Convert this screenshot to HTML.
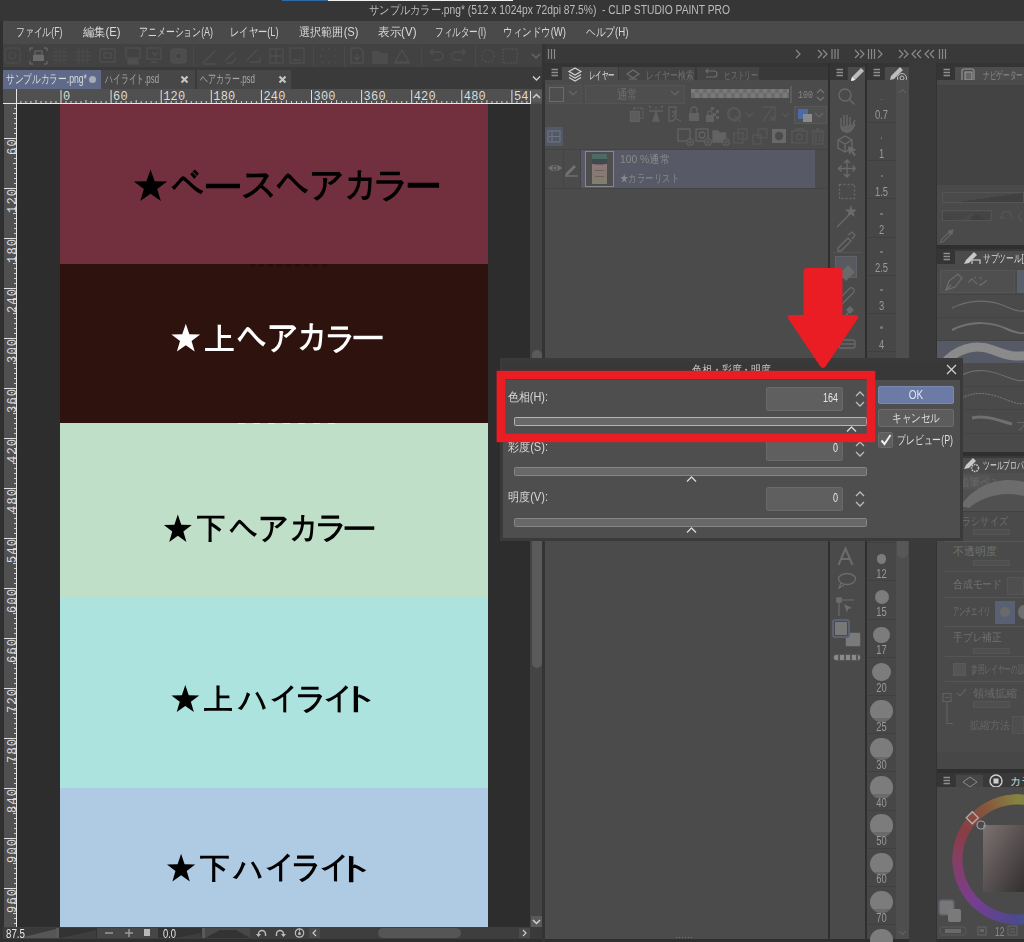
<!DOCTYPE html><html><head><meta charset="utf-8">
<style>
*{box-sizing:border-box;margin:0;padding:0}
html,body{width:1024px;height:942px;overflow:hidden;background:#2e2e2e;font-family:"Liberation Sans",sans-serif}
.a{position:absolute}
.t{position:absolute;white-space:nowrap;line-height:1}
</style></head><body>
<div class="a" style="left:0px;top:0px;width:1024px;height:21px;background:#363636;"></div>
<div class="a" style="left:282px;top:0px;width:46px;height:1px;background:#2f6aa5;"></div>
<div class="a" style="left:328px;top:0px;width:185px;height:1px;background:#f0f0f0;"></div>
<div class="t" style="left: 369px; top: 4px; font-size: 12px; color: rgb(188, 188, 188); --w: 361; transform-origin: 0px 0px; transform: scaleX(0.856465);">サンプルカラー.png* (512 x 1024px 72dpi 87.5%)&nbsp; - CLIP STUDIO PAINT PRO</div>
<div class="a" style="left:0px;top:21px;width:3px;height:921px;background:#303030;"></div>
<div class="a" style="left:3px;top:21px;width:1021px;height:23px;background:#4a4a4a;"></div>
<div class="t" style="left: 16px; top: 26px; font-size: 12px; color: rgb(216, 216, 216); --w: 46.5; transform-origin: 0px 0px; transform: scaleX(0.734271);">ファイル(F)</div>
<div class="t" style="left: 82.5px; top: 26px; font-size: 12px; color: rgb(216, 216, 216); --w: 37.5; transform-origin: 0px 0px; transform: scaleX(0.9375);">編集(E)</div>
<div class="t" style="left: 138.5px; top: 26px; font-size: 12px; color: rgb(216, 216, 216); --w: 74; transform-origin: 0px 0px; transform: scaleX(0.74);">アニメーション(A)</div>
<div class="t" style="left: 230px; top: 26px; font-size: 12px; color: rgb(216, 216, 216); --w: 48.5; transform-origin: 0px 0px; transform: scaleX(0.773872);">レイヤー(L)</div>
<div class="t" style="left: 298.5px; top: 26px; font-size: 12px; color: rgb(216, 216, 216); --w: 59.5; transform-origin: 0px 0px; transform: scaleX(0.929688);">選択範囲(S)</div>
<div class="t" style="left: 377.5px; top: 26px; font-size: 12px; color: rgb(216, 216, 216); --w: 38.5; transform-origin: 0px 0px; transform: scaleX(0.9625);">表示(V)</div>
<div class="t" style="left: 435px; top: 26px; font-size: 12px; color: rgb(216, 216, 216); --w: 51; transform-origin: 0px 0px; transform: scaleX(0.715005);">フィルター(I)</div>
<div class="t" style="left: 503px; top: 26px; font-size: 12px; color: rgb(216, 216, 216); --w: 63; transform-origin: 0px 0px; transform: scaleX(0.79417);">ウィンドウ(W)</div>
<div class="t" style="left: 585.5px; top: 26px; font-size: 12px; color: rgb(216, 216, 216); --w: 42.5; transform-origin: 0px 0px; transform: scaleX(0.806882);">ヘルプ(H)</div>
<div class="a" style="left:3px;top:44px;width:539px;height:24px;background:#424242;"></div>
<div class="a" style="left:3px;top:67px;width:539px;height:1px;background:#3a3a3a;"></div>
<svg class="a" style="left:0;top:44px" width="545" height="24"><rect x="5" y="4" width="15" height="15" rx="2" fill="none" stroke="#4f4f4f"></rect><path d="M12.5 8a3.5 3.5 0 1 0 3.5 3.5a2 2 0 0 0-2-2" fill="none" stroke="#4f4f4f"></path><path d="M30 4h3M30 4v3M47 4h-3M47 4v3M30 20h3M30 20v-3M47 20h-3M47 20v-3" stroke="#707070" fill="none"></path><rect x="33" y="11" width="11" height="6" fill="#6a6a6a"></rect><rect x="35" y="7" width="7" height="4" fill="none" stroke="#6a6a6a"></rect><path d="M52 8h16M52 12h16M52 16h16M56 4v16M60 4v16M64 4v16" stroke="#4c4c4c"></path><path d="M75 8h16M75 12h16M75 16h16M79 4v16M83 4v16M87 4v16" stroke="#4c4c4c"></path><g fill="none" stroke="#4f4f4f" stroke-width="1.4"><rect x="100" y="5" width="15" height="13" rx="1"></rect><rect x="104" y="9" width="7" height="5"></rect><rect x="126" y="4" width="14" height="10"></rect><rect x="128" y="15" width="10" height="5" fill="#4f4f4f"></rect><rect x="147" y="4" width="14" height="11"></rect><path d="M151 18h6M152 8l3 3 3-3"></path><rect x="171" y="5" width="15" height="14" rx="3" fill="#4c4c4c"></rect><circle cx="178.5" cy="12" r="3" fill="#424242"></circle><path d="M203 19l12-12M203 20h14"></path><path d="M225 17l10-10M226 19h6l4-5"></path><path d="M247 16l10-10M250 18h10v-5"></path><rect x="270" y="5" width="13" height="14"></rect><path d="M270 12h13M276 5v14"></path><rect x="290" y="4" width="14" height="15"></rect><path d="M293 16h8"></path><path d="M322 5l2 2M336 5l-2 2M322 19l2-2M336 19l-2-2M329 4v3M329 17v3M320 12h3M335 12h3" stroke-dasharray="1.5 1"></path><path d="M351 4h9l3 3v12h-12z"></path><path d="M357 10v6M354 13l3 3 3-3"></path><path d="M373 8h5l2 2h7v9h-14z" fill="#4c4c4c"></path><path d="M395 18l7-12 7 12z"></path><path d="M394 19h16"></path><path d="M430 8h9a4 4 0 0 1 0 8h-6M433 5l-3 3 3 3"></path><path d="M465 8h-9a4 4 0 0 0 0 8h6M462 5l3 3-3 3"></path><circle cx="488" cy="12" r="6" stroke-dasharray="2 1.5"></circle><rect x="503" y="5" width="14" height="14" stroke-dasharray="2 1"></rect></g><rect x="193" y="2" width="1" height="20" fill="#4a4a4a"></rect><rect x="313" y="2" width="1" height="20" fill="#4a4a4a"></rect><rect x="344" y="2" width="1" height="20" fill="#4a4a4a"></rect><rect x="421" y="2" width="1" height="20" fill="#4a4a4a"></rect><rect x="475" y="2" width="1" height="20" fill="#4a4a4a"></rect><path d="M532 10l4 4 4-4" stroke="#666" fill="none" stroke-width="1.5"></path></svg>
<div class="a" style="left:3px;top:68px;width:539px;height:21px;background:#3a3a3a;"></div>
<div class="a" style="left:3px;top:70px;width:98px;height:19px;background:#5e6a88;"></div>
<div class="a" style="left:101px;top:70px;width:94px;height:19px;background:#474747;"></div>
<div class="a" style="left:197px;top:70px;width:94px;height:19px;background:#474747;"></div>
<div class="t" style="left: 6px; top: 73px; font-size: 12px; color: rgb(220, 220, 220); --w: 81; transform-origin: 0px 0px; transform: scaleX(0.723013);">サンプルカラー.png*</div>
<div class="a" style="left:89px;top:76px;width:7px;height:7px;border-radius:50%;background:#a8acb8"></div>
<div class="t" style="left: 105px; top: 73px; font-size: 12px; color: rgb(168, 168, 168); --w: 54; transform-origin: 0px 0px; transform: scaleX(0.653061);">ハイライト.psd</div>
<div class="t" style="left: 200px; top: 73px; font-size: 12px; color: rgb(168, 168, 168); --w: 55; transform-origin: 0px 0px; transform: scaleX(0.665155);">ヘアカラー.psd</div>
<svg class="a" style="left:180px;top:75px" width="9" height="9"><path d="M1.5 1.5l6 6M7.5 1.5l-6 6" stroke="#c4c4c4" stroke-width="2.2"></path></svg>
<svg class="a" style="left:278px;top:75px" width="9" height="9"><path d="M1.5 1.5l6 6M7.5 1.5l-6 6" stroke="#c4c4c4" stroke-width="2.2"></path></svg>
<svg class="a" style="left:532px;top:75px" width="9" height="7"><path d="M1 1.5l3.5 3.5 3.5-3.5" stroke="#d0d0d0" fill="none" stroke-width="1.4"></path></svg>
<div class="a" style="left:3px;top:89px;width:539px;height:15px;background:#505050;"></div>
<div class="a" style="left:4px;top:104px;width:13px;height:823px;background:#505050;"></div>
<svg class="a" style="left:0;top:0" width="545" height="942"><rect x="3" y="103" width="527" height="1" fill="#e8e8e8"></rect><rect x="16" y="89" width="1" height="838" fill="#e8e8e8"></rect><rect x="530" y="91" width="1" height="13" fill="#e0e0e0"></rect><rect x="20.4" y="101" width="1" height="2" fill="#cfcfcf"></rect><rect x="25.4" y="101" width="1" height="2" fill="#cfcfcf"></rect><rect x="30.4" y="101" width="1" height="2" fill="#cfcfcf"></rect><rect x="35.5" y="100" width="1" height="3" fill="#cfcfcf"></rect><rect x="40.5" y="101" width="1" height="2" fill="#cfcfcf"></rect><rect x="45.5" y="101" width="1" height="2" fill="#cfcfcf"></rect><rect x="50.5" y="101" width="1" height="2" fill="#cfcfcf"></rect><rect x="55.5" y="101" width="1" height="2" fill="#cfcfcf"></rect><rect x="60.5" y="90" width="1" height="13" fill="#e0e0e0"></rect><rect x="65.5" y="101" width="1" height="2" fill="#cfcfcf"></rect><rect x="70.5" y="101" width="1" height="2" fill="#cfcfcf"></rect><rect x="75.5" y="101" width="1" height="2" fill="#cfcfcf"></rect><rect x="80.5" y="101" width="1" height="2" fill="#cfcfcf"></rect><rect x="85.5" y="100" width="1" height="3" fill="#cfcfcf"></rect><rect x="90.6" y="101" width="1" height="2" fill="#cfcfcf"></rect><rect x="95.6" y="101" width="1" height="2" fill="#cfcfcf"></rect><rect x="100.6" y="101" width="1" height="2" fill="#cfcfcf"></rect><rect x="105.6" y="101" width="1" height="2" fill="#cfcfcf"></rect><rect x="110.6" y="90" width="1" height="13" fill="#e0e0e0"></rect><rect x="115.6" y="101" width="1" height="2" fill="#cfcfcf"></rect><rect x="120.6" y="101" width="1" height="2" fill="#cfcfcf"></rect><rect x="125.6" y="101" width="1" height="2" fill="#cfcfcf"></rect><rect x="130.6" y="101" width="1" height="2" fill="#cfcfcf"></rect><rect x="135.7" y="100" width="1" height="3" fill="#cfcfcf"></rect><rect x="140.7" y="101" width="1" height="2" fill="#cfcfcf"></rect><rect x="145.7" y="101" width="1" height="2" fill="#cfcfcf"></rect><rect x="150.7" y="101" width="1" height="2" fill="#cfcfcf"></rect><rect x="155.7" y="101" width="1" height="2" fill="#cfcfcf"></rect><rect x="160.7" y="90" width="1" height="13" fill="#e0e0e0"></rect><rect x="165.7" y="101" width="1" height="2" fill="#cfcfcf"></rect><rect x="170.7" y="101" width="1" height="2" fill="#cfcfcf"></rect><rect x="175.7" y="101" width="1" height="2" fill="#cfcfcf"></rect><rect x="180.7" y="101" width="1" height="2" fill="#cfcfcf"></rect><rect x="185.8" y="100" width="1" height="3" fill="#cfcfcf"></rect><rect x="190.8" y="101" width="1" height="2" fill="#cfcfcf"></rect><rect x="195.8" y="101" width="1" height="2" fill="#cfcfcf"></rect><rect x="200.8" y="101" width="1" height="2" fill="#cfcfcf"></rect><rect x="205.8" y="101" width="1" height="2" fill="#cfcfcf"></rect><rect x="210.8" y="90" width="1" height="13" fill="#e0e0e0"></rect><rect x="215.8" y="101" width="1" height="2" fill="#cfcfcf"></rect><rect x="220.8" y="101" width="1" height="2" fill="#cfcfcf"></rect><rect x="225.8" y="101" width="1" height="2" fill="#cfcfcf"></rect><rect x="230.8" y="101" width="1" height="2" fill="#cfcfcf"></rect><rect x="235.9" y="100" width="1" height="3" fill="#cfcfcf"></rect><rect x="240.9" y="101" width="1" height="2" fill="#cfcfcf"></rect><rect x="245.9" y="101" width="1" height="2" fill="#cfcfcf"></rect><rect x="250.9" y="101" width="1" height="2" fill="#cfcfcf"></rect><rect x="255.9" y="101" width="1" height="2" fill="#cfcfcf"></rect><rect x="260.9" y="90" width="1" height="13" fill="#e0e0e0"></rect><rect x="265.9" y="101" width="1" height="2" fill="#cfcfcf"></rect><rect x="270.9" y="101" width="1" height="2" fill="#cfcfcf"></rect><rect x="275.9" y="101" width="1" height="2" fill="#cfcfcf"></rect><rect x="280.9" y="101" width="1" height="2" fill="#cfcfcf"></rect><rect x="285.9" y="100" width="1" height="3" fill="#cfcfcf"></rect><rect x="291.0" y="101" width="1" height="2" fill="#cfcfcf"></rect><rect x="296.0" y="101" width="1" height="2" fill="#cfcfcf"></rect><rect x="301.0" y="101" width="1" height="2" fill="#cfcfcf"></rect><rect x="306.0" y="101" width="1" height="2" fill="#cfcfcf"></rect><rect x="311.0" y="90" width="1" height="13" fill="#e0e0e0"></rect><rect x="316.0" y="101" width="1" height="2" fill="#cfcfcf"></rect><rect x="321.0" y="101" width="1" height="2" fill="#cfcfcf"></rect><rect x="326.0" y="101" width="1" height="2" fill="#cfcfcf"></rect><rect x="331.0" y="101" width="1" height="2" fill="#cfcfcf"></rect><rect x="336.1" y="100" width="1" height="3" fill="#cfcfcf"></rect><rect x="341.1" y="101" width="1" height="2" fill="#cfcfcf"></rect><rect x="346.1" y="101" width="1" height="2" fill="#cfcfcf"></rect><rect x="351.1" y="101" width="1" height="2" fill="#cfcfcf"></rect><rect x="356.1" y="101" width="1" height="2" fill="#cfcfcf"></rect><rect x="361.1" y="90" width="1" height="13" fill="#e0e0e0"></rect><rect x="366.1" y="101" width="1" height="2" fill="#cfcfcf"></rect><rect x="371.1" y="101" width="1" height="2" fill="#cfcfcf"></rect><rect x="376.1" y="101" width="1" height="2" fill="#cfcfcf"></rect><rect x="381.1" y="101" width="1" height="2" fill="#cfcfcf"></rect><rect x="386.2" y="100" width="1" height="3" fill="#cfcfcf"></rect><rect x="391.2" y="101" width="1" height="2" fill="#cfcfcf"></rect><rect x="396.2" y="101" width="1" height="2" fill="#cfcfcf"></rect><rect x="401.2" y="101" width="1" height="2" fill="#cfcfcf"></rect><rect x="406.2" y="101" width="1" height="2" fill="#cfcfcf"></rect><rect x="411.2" y="90" width="1" height="13" fill="#e0e0e0"></rect><rect x="416.2" y="101" width="1" height="2" fill="#cfcfcf"></rect><rect x="421.2" y="101" width="1" height="2" fill="#cfcfcf"></rect><rect x="426.2" y="101" width="1" height="2" fill="#cfcfcf"></rect><rect x="431.2" y="101" width="1" height="2" fill="#cfcfcf"></rect><rect x="436.2" y="100" width="1" height="3" fill="#cfcfcf"></rect><rect x="441.3" y="101" width="1" height="2" fill="#cfcfcf"></rect><rect x="446.3" y="101" width="1" height="2" fill="#cfcfcf"></rect><rect x="451.3" y="101" width="1" height="2" fill="#cfcfcf"></rect><rect x="456.3" y="101" width="1" height="2" fill="#cfcfcf"></rect><rect x="461.3" y="90" width="1" height="13" fill="#e0e0e0"></rect><rect x="466.3" y="101" width="1" height="2" fill="#cfcfcf"></rect><rect x="471.3" y="101" width="1" height="2" fill="#cfcfcf"></rect><rect x="476.3" y="101" width="1" height="2" fill="#cfcfcf"></rect><rect x="481.3" y="101" width="1" height="2" fill="#cfcfcf"></rect><rect x="486.4" y="100" width="1" height="3" fill="#cfcfcf"></rect><rect x="491.4" y="101" width="1" height="2" fill="#cfcfcf"></rect><rect x="496.4" y="101" width="1" height="2" fill="#cfcfcf"></rect><rect x="501.4" y="101" width="1" height="2" fill="#cfcfcf"></rect><rect x="506.4" y="101" width="1" height="2" fill="#cfcfcf"></rect><rect x="511.4" y="90" width="1" height="13" fill="#e0e0e0"></rect><rect x="516.4" y="101" width="1" height="2" fill="#cfcfcf"></rect><rect x="521.4" y="101" width="1" height="2" fill="#cfcfcf"></rect><rect x="526.4" y="101" width="1" height="2" fill="#cfcfcf"></rect><rect x="14" y="108.0" width="2" height="1" fill="#cfcfcf"></rect><rect x="13" y="113.0" width="3" height="1" fill="#cfcfcf"></rect><rect x="14" y="118.0" width="2" height="1" fill="#cfcfcf"></rect><rect x="14" y="123.0" width="2" height="1" fill="#cfcfcf"></rect><rect x="14" y="128.0" width="2" height="1" fill="#cfcfcf"></rect><rect x="14" y="133.0" width="2" height="1" fill="#cfcfcf"></rect><rect x="4" y="138.0" width="12" height="1" fill="#e0e0e0"></rect><rect x="14" y="143.0" width="2" height="1" fill="#cfcfcf"></rect><rect x="14" y="148.0" width="2" height="1" fill="#cfcfcf"></rect><rect x="14" y="153.0" width="2" height="1" fill="#cfcfcf"></rect><rect x="14" y="158.0" width="2" height="1" fill="#cfcfcf"></rect><rect x="13" y="163.0" width="3" height="1" fill="#cfcfcf"></rect><rect x="14" y="168.0" width="2" height="1" fill="#cfcfcf"></rect><rect x="14" y="173.0" width="2" height="1" fill="#cfcfcf"></rect><rect x="14" y="178.0" width="2" height="1" fill="#cfcfcf"></rect><rect x="14" y="183.0" width="2" height="1" fill="#cfcfcf"></rect><rect x="4" y="188.0" width="12" height="1" fill="#e0e0e0"></rect><rect x="14" y="193.0" width="2" height="1" fill="#cfcfcf"></rect><rect x="14" y="198.0" width="2" height="1" fill="#cfcfcf"></rect><rect x="14" y="203.0" width="2" height="1" fill="#cfcfcf"></rect><rect x="14" y="208.0" width="2" height="1" fill="#cfcfcf"></rect><rect x="13" y="213.0" width="3" height="1" fill="#cfcfcf"></rect><rect x="14" y="218.0" width="2" height="1" fill="#cfcfcf"></rect><rect x="14" y="223.0" width="2" height="1" fill="#cfcfcf"></rect><rect x="14" y="228.0" width="2" height="1" fill="#cfcfcf"></rect><rect x="14" y="233.0" width="2" height="1" fill="#cfcfcf"></rect><rect x="4" y="238.0" width="12" height="1" fill="#e0e0e0"></rect><rect x="14" y="243.0" width="2" height="1" fill="#cfcfcf"></rect><rect x="14" y="248.0" width="2" height="1" fill="#cfcfcf"></rect><rect x="14" y="253.0" width="2" height="1" fill="#cfcfcf"></rect><rect x="14" y="258.0" width="2" height="1" fill="#cfcfcf"></rect><rect x="13" y="263.0" width="3" height="1" fill="#cfcfcf"></rect><rect x="14" y="268.0" width="2" height="1" fill="#cfcfcf"></rect><rect x="14" y="273.0" width="2" height="1" fill="#cfcfcf"></rect><rect x="14" y="278.0" width="2" height="1" fill="#cfcfcf"></rect><rect x="14" y="283.0" width="2" height="1" fill="#cfcfcf"></rect><rect x="4" y="288.0" width="12" height="1" fill="#e0e0e0"></rect><rect x="14" y="293.0" width="2" height="1" fill="#cfcfcf"></rect><rect x="14" y="298.0" width="2" height="1" fill="#cfcfcf"></rect><rect x="14" y="303.0" width="2" height="1" fill="#cfcfcf"></rect><rect x="14" y="308.0" width="2" height="1" fill="#cfcfcf"></rect><rect x="13" y="313.0" width="3" height="1" fill="#cfcfcf"></rect><rect x="14" y="318.0" width="2" height="1" fill="#cfcfcf"></rect><rect x="14" y="323.0" width="2" height="1" fill="#cfcfcf"></rect><rect x="14" y="328.0" width="2" height="1" fill="#cfcfcf"></rect><rect x="14" y="333.0" width="2" height="1" fill="#cfcfcf"></rect><rect x="4" y="338.0" width="12" height="1" fill="#e0e0e0"></rect><rect x="14" y="343.0" width="2" height="1" fill="#cfcfcf"></rect><rect x="14" y="348.0" width="2" height="1" fill="#cfcfcf"></rect><rect x="14" y="353.0" width="2" height="1" fill="#cfcfcf"></rect><rect x="14" y="358.0" width="2" height="1" fill="#cfcfcf"></rect><rect x="13" y="363.0" width="3" height="1" fill="#cfcfcf"></rect><rect x="14" y="368.0" width="2" height="1" fill="#cfcfcf"></rect><rect x="14" y="373.0" width="2" height="1" fill="#cfcfcf"></rect><rect x="14" y="378.0" width="2" height="1" fill="#cfcfcf"></rect><rect x="14" y="383.0" width="2" height="1" fill="#cfcfcf"></rect><rect x="4" y="388.0" width="12" height="1" fill="#e0e0e0"></rect><rect x="14" y="393.0" width="2" height="1" fill="#cfcfcf"></rect><rect x="14" y="398.0" width="2" height="1" fill="#cfcfcf"></rect><rect x="14" y="403.0" width="2" height="1" fill="#cfcfcf"></rect><rect x="14" y="408.0" width="2" height="1" fill="#cfcfcf"></rect><rect x="13" y="413.0" width="3" height="1" fill="#cfcfcf"></rect><rect x="14" y="418.0" width="2" height="1" fill="#cfcfcf"></rect><rect x="14" y="423.0" width="2" height="1" fill="#cfcfcf"></rect><rect x="14" y="428.0" width="2" height="1" fill="#cfcfcf"></rect><rect x="14" y="433.0" width="2" height="1" fill="#cfcfcf"></rect><rect x="4" y="438.0" width="12" height="1" fill="#e0e0e0"></rect><rect x="14" y="443.0" width="2" height="1" fill="#cfcfcf"></rect><rect x="14" y="448.0" width="2" height="1" fill="#cfcfcf"></rect><rect x="14" y="453.0" width="2" height="1" fill="#cfcfcf"></rect><rect x="14" y="458.0" width="2" height="1" fill="#cfcfcf"></rect><rect x="13" y="463.0" width="3" height="1" fill="#cfcfcf"></rect><rect x="14" y="468.0" width="2" height="1" fill="#cfcfcf"></rect><rect x="14" y="473.0" width="2" height="1" fill="#cfcfcf"></rect><rect x="14" y="478.0" width="2" height="1" fill="#cfcfcf"></rect><rect x="14" y="483.0" width="2" height="1" fill="#cfcfcf"></rect><rect x="4" y="488.0" width="12" height="1" fill="#e0e0e0"></rect><rect x="14" y="493.0" width="2" height="1" fill="#cfcfcf"></rect><rect x="14" y="498.0" width="2" height="1" fill="#cfcfcf"></rect><rect x="14" y="503.0" width="2" height="1" fill="#cfcfcf"></rect><rect x="14" y="508.0" width="2" height="1" fill="#cfcfcf"></rect><rect x="13" y="513.0" width="3" height="1" fill="#cfcfcf"></rect><rect x="14" y="518.0" width="2" height="1" fill="#cfcfcf"></rect><rect x="14" y="523.0" width="2" height="1" fill="#cfcfcf"></rect><rect x="14" y="528.0" width="2" height="1" fill="#cfcfcf"></rect><rect x="14" y="533.0" width="2" height="1" fill="#cfcfcf"></rect><rect x="4" y="538.0" width="12" height="1" fill="#e0e0e0"></rect><rect x="14" y="543.0" width="2" height="1" fill="#cfcfcf"></rect><rect x="14" y="548.0" width="2" height="1" fill="#cfcfcf"></rect><rect x="14" y="553.0" width="2" height="1" fill="#cfcfcf"></rect><rect x="14" y="558.0" width="2" height="1" fill="#cfcfcf"></rect><rect x="13" y="563.0" width="3" height="1" fill="#cfcfcf"></rect><rect x="14" y="568.0" width="2" height="1" fill="#cfcfcf"></rect><rect x="14" y="573.0" width="2" height="1" fill="#cfcfcf"></rect><rect x="14" y="578.0" width="2" height="1" fill="#cfcfcf"></rect><rect x="14" y="583.0" width="2" height="1" fill="#cfcfcf"></rect><rect x="4" y="588.0" width="12" height="1" fill="#e0e0e0"></rect><rect x="14" y="593.0" width="2" height="1" fill="#cfcfcf"></rect><rect x="14" y="598.0" width="2" height="1" fill="#cfcfcf"></rect><rect x="14" y="603.0" width="2" height="1" fill="#cfcfcf"></rect><rect x="14" y="608.0" width="2" height="1" fill="#cfcfcf"></rect><rect x="13" y="613.0" width="3" height="1" fill="#cfcfcf"></rect><rect x="14" y="618.0" width="2" height="1" fill="#cfcfcf"></rect><rect x="14" y="623.0" width="2" height="1" fill="#cfcfcf"></rect><rect x="14" y="628.0" width="2" height="1" fill="#cfcfcf"></rect><rect x="14" y="633.0" width="2" height="1" fill="#cfcfcf"></rect><rect x="4" y="638.0" width="12" height="1" fill="#e0e0e0"></rect><rect x="14" y="643.0" width="2" height="1" fill="#cfcfcf"></rect><rect x="14" y="648.0" width="2" height="1" fill="#cfcfcf"></rect><rect x="14" y="653.0" width="2" height="1" fill="#cfcfcf"></rect><rect x="14" y="658.0" width="2" height="1" fill="#cfcfcf"></rect><rect x="13" y="663.0" width="3" height="1" fill="#cfcfcf"></rect><rect x="14" y="668.0" width="2" height="1" fill="#cfcfcf"></rect><rect x="14" y="673.0" width="2" height="1" fill="#cfcfcf"></rect><rect x="14" y="678.0" width="2" height="1" fill="#cfcfcf"></rect><rect x="14" y="683.0" width="2" height="1" fill="#cfcfcf"></rect><rect x="4" y="688.0" width="12" height="1" fill="#e0e0e0"></rect><rect x="14" y="693.0" width="2" height="1" fill="#cfcfcf"></rect><rect x="14" y="698.0" width="2" height="1" fill="#cfcfcf"></rect><rect x="14" y="703.0" width="2" height="1" fill="#cfcfcf"></rect><rect x="14" y="708.0" width="2" height="1" fill="#cfcfcf"></rect><rect x="13" y="713.0" width="3" height="1" fill="#cfcfcf"></rect><rect x="14" y="718.0" width="2" height="1" fill="#cfcfcf"></rect><rect x="14" y="723.0" width="2" height="1" fill="#cfcfcf"></rect><rect x="14" y="728.0" width="2" height="1" fill="#cfcfcf"></rect><rect x="14" y="733.0" width="2" height="1" fill="#cfcfcf"></rect><rect x="4" y="738.0" width="12" height="1" fill="#e0e0e0"></rect><rect x="14" y="743.0" width="2" height="1" fill="#cfcfcf"></rect><rect x="14" y="748.0" width="2" height="1" fill="#cfcfcf"></rect><rect x="14" y="753.0" width="2" height="1" fill="#cfcfcf"></rect><rect x="14" y="758.0" width="2" height="1" fill="#cfcfcf"></rect><rect x="13" y="763.0" width="3" height="1" fill="#cfcfcf"></rect><rect x="14" y="768.0" width="2" height="1" fill="#cfcfcf"></rect><rect x="14" y="773.0" width="2" height="1" fill="#cfcfcf"></rect><rect x="14" y="778.0" width="2" height="1" fill="#cfcfcf"></rect><rect x="14" y="783.0" width="2" height="1" fill="#cfcfcf"></rect><rect x="4" y="788.0" width="12" height="1" fill="#e0e0e0"></rect><rect x="14" y="793.0" width="2" height="1" fill="#cfcfcf"></rect><rect x="14" y="798.0" width="2" height="1" fill="#cfcfcf"></rect><rect x="14" y="803.0" width="2" height="1" fill="#cfcfcf"></rect><rect x="14" y="808.0" width="2" height="1" fill="#cfcfcf"></rect><rect x="13" y="813.0" width="3" height="1" fill="#cfcfcf"></rect><rect x="14" y="818.0" width="2" height="1" fill="#cfcfcf"></rect><rect x="14" y="823.0" width="2" height="1" fill="#cfcfcf"></rect><rect x="14" y="828.0" width="2" height="1" fill="#cfcfcf"></rect><rect x="14" y="833.0" width="2" height="1" fill="#cfcfcf"></rect><rect x="4" y="838.0" width="12" height="1" fill="#e0e0e0"></rect><rect x="14" y="843.0" width="2" height="1" fill="#cfcfcf"></rect><rect x="14" y="848.0" width="2" height="1" fill="#cfcfcf"></rect><rect x="14" y="853.0" width="2" height="1" fill="#cfcfcf"></rect><rect x="14" y="858.0" width="2" height="1" fill="#cfcfcf"></rect><rect x="13" y="863.0" width="3" height="1" fill="#cfcfcf"></rect><rect x="14" y="868.0" width="2" height="1" fill="#cfcfcf"></rect><rect x="14" y="873.0" width="2" height="1" fill="#cfcfcf"></rect><rect x="14" y="878.0" width="2" height="1" fill="#cfcfcf"></rect><rect x="14" y="883.0" width="2" height="1" fill="#cfcfcf"></rect><rect x="4" y="888.0" width="12" height="1" fill="#e0e0e0"></rect><rect x="14" y="893.0" width="2" height="1" fill="#cfcfcf"></rect><rect x="14" y="898.0" width="2" height="1" fill="#cfcfcf"></rect><rect x="14" y="903.0" width="2" height="1" fill="#cfcfcf"></rect><rect x="14" y="908.0" width="2" height="1" fill="#cfcfcf"></rect><rect x="13" y="913.0" width="3" height="1" fill="#cfcfcf"></rect><rect x="14" y="918.0" width="2" height="1" fill="#cfcfcf"></rect><rect x="14" y="923.0" width="2" height="1" fill="#cfcfcf"></rect></svg>
<div class="t" style="left:63.0px;top:91px;font-family:'Liberation Mono',monospace;font-size:12px;letter-spacing:0.2px;color:#dcdcdc">0</div>
<div class="t" style="left:113.1px;top:91px;font-family:'Liberation Mono',monospace;font-size:12px;letter-spacing:0.2px;color:#dcdcdc">60</div>
<div class="t" style="left:163.2px;top:91px;font-family:'Liberation Mono',monospace;font-size:12px;letter-spacing:0.2px;color:#dcdcdc">120</div>
<div class="t" style="left:213.3px;top:91px;font-family:'Liberation Mono',monospace;font-size:12px;letter-spacing:0.2px;color:#dcdcdc">180</div>
<div class="t" style="left:263.4px;top:91px;font-family:'Liberation Mono',monospace;font-size:12px;letter-spacing:0.2px;color:#dcdcdc">240</div>
<div class="t" style="left:313.5px;top:91px;font-family:'Liberation Mono',monospace;font-size:12px;letter-spacing:0.2px;color:#dcdcdc">300</div>
<div class="t" style="left:363.6px;top:91px;font-family:'Liberation Mono',monospace;font-size:12px;letter-spacing:0.2px;color:#dcdcdc">360</div>
<div class="t" style="left:413.7px;top:91px;font-family:'Liberation Mono',monospace;font-size:12px;letter-spacing:0.2px;color:#dcdcdc">420</div>
<div class="t" style="left:463.8px;top:91px;font-family:'Liberation Mono',monospace;font-size:12px;letter-spacing:0.2px;color:#dcdcdc">480</div>
<div class="t" style="left:513.9px;top:91px;font-family:'Liberation Mono',monospace;font-size:12px;letter-spacing:0.2px;color:#dcdcdc">54</div>
<div class="t" style="left:6.5px;top:154.5px;font-family:'Liberation Mono',monospace;font-size:12px;letter-spacing:1.2px;color:#dcdcdc;transform:rotate(-90deg);transform-origin:0 0">60</div>
<div class="t" style="left:6.5px;top:212.5px;font-family:'Liberation Mono',monospace;font-size:12px;letter-spacing:1.2px;color:#dcdcdc;transform:rotate(-90deg);transform-origin:0 0">120</div>
<div class="t" style="left:6.5px;top:262.5px;font-family:'Liberation Mono',monospace;font-size:12px;letter-spacing:1.2px;color:#dcdcdc;transform:rotate(-90deg);transform-origin:0 0">180</div>
<div class="t" style="left:6.5px;top:312.5px;font-family:'Liberation Mono',monospace;font-size:12px;letter-spacing:1.2px;color:#dcdcdc;transform:rotate(-90deg);transform-origin:0 0">240</div>
<div class="t" style="left:6.5px;top:362.5px;font-family:'Liberation Mono',monospace;font-size:12px;letter-spacing:1.2px;color:#dcdcdc;transform:rotate(-90deg);transform-origin:0 0">300</div>
<div class="t" style="left:6.5px;top:412.5px;font-family:'Liberation Mono',monospace;font-size:12px;letter-spacing:1.2px;color:#dcdcdc;transform:rotate(-90deg);transform-origin:0 0">360</div>
<div class="t" style="left:6.5px;top:462.5px;font-family:'Liberation Mono',monospace;font-size:12px;letter-spacing:1.2px;color:#dcdcdc;transform:rotate(-90deg);transform-origin:0 0">420</div>
<div class="t" style="left:6.5px;top:512.5px;font-family:'Liberation Mono',monospace;font-size:12px;letter-spacing:1.2px;color:#dcdcdc;transform:rotate(-90deg);transform-origin:0 0">480</div>
<div class="t" style="left:6.5px;top:562.5px;font-family:'Liberation Mono',monospace;font-size:12px;letter-spacing:1.2px;color:#dcdcdc;transform:rotate(-90deg);transform-origin:0 0">540</div>
<div class="t" style="left:6.5px;top:612.5px;font-family:'Liberation Mono',monospace;font-size:12px;letter-spacing:1.2px;color:#dcdcdc;transform:rotate(-90deg);transform-origin:0 0">600</div>
<div class="t" style="left:6.5px;top:662.5px;font-family:'Liberation Mono',monospace;font-size:12px;letter-spacing:1.2px;color:#dcdcdc;transform:rotate(-90deg);transform-origin:0 0">660</div>
<div class="t" style="left:6.5px;top:712.5px;font-family:'Liberation Mono',monospace;font-size:12px;letter-spacing:1.2px;color:#dcdcdc;transform:rotate(-90deg);transform-origin:0 0">720</div>
<div class="t" style="left:6.5px;top:762.5px;font-family:'Liberation Mono',monospace;font-size:12px;letter-spacing:1.2px;color:#dcdcdc;transform:rotate(-90deg);transform-origin:0 0">780</div>
<div class="t" style="left:6.5px;top:812.5px;font-family:'Liberation Mono',monospace;font-size:12px;letter-spacing:1.2px;color:#dcdcdc;transform:rotate(-90deg);transform-origin:0 0">840</div>
<div class="t" style="left:6.5px;top:862.5px;font-family:'Liberation Mono',monospace;font-size:12px;letter-spacing:1.2px;color:#dcdcdc;transform:rotate(-90deg);transform-origin:0 0">900</div>
<div class="t" style="left:6.5px;top:912.5px;font-family:'Liberation Mono',monospace;font-size:12px;letter-spacing:1.2px;color:#dcdcdc;transform:rotate(-90deg);transform-origin:0 0">960</div>
<div class="a" style="left:3px;top:89px;width:13px;height:14px;background:#505050;"></div>
<div class="a" style="left:531px;top:90px;width:11px;height:12px;background:#5a5a5a;"></div>
<svg class="a" style="left:531px;top:90px" width="11" height="12"><path d="M2 8l3.5-3.5L9 8" stroke="#d0d0d0" fill="none" stroke-width="1.5"></path></svg>
<div class="a" style="left:17px;top:104px;width:513px;height:823px;background:#2d2d2d;"></div>
<div class="a" style="left:60px;top:104px;width:428px;height:160px;background:#722f3d;"></div>
<div class="a" style="left:60px;top:264px;width:428px;height:159px;background:#2e120e;"></div>
<div class="a" style="left:60px;top:423px;width:428px;height:174px;background:#c0dfc8;"></div>
<div class="a" style="left:60px;top:597px;width:428px;height:191px;background:#ade3de;"></div>
<div class="a" style="left:60px;top:788px;width:428px;height:139px;background:#afcbe3;"></div>
<div class="a" style="left:238px;top:423px;width:102px;height:1px;background:repeating-linear-gradient(90deg,#e8f4e8 0 7px,transparent 7px 15px)"></div>
<div class="a" style="left:250px;top:264px;width:80px;height:3px;background:repeating-linear-gradient(90deg,#1e0a08 0 5px,transparent 5px 9px);opacity:.6"></div>
<div class="t" style="left:171.54px;top:165.41px;font-size:100px;font-weight:bold;color:#000;transform:scale(0.3188,0.3623);transform-origin:0 0">ベ</div>
<div class="t" style="left:203.49px;top:169.97px;font-size:100px;font-weight:bold;color:#000;transform:scale(0.3948,0.3357);transform-origin:0 0">ー</div>
<div class="t" style="left:240.68px;top:166.23px;font-size:100px;font-weight:bold;color:#000;transform:scale(0.3631,0.3535);transform-origin:0 0">ス</div>
<div class="t" style="left:277.21px;top:162.40px;font-size:100px;font-weight:bold;color:#000;transform:scale(0.3119,0.4000);transform-origin:0 0">ヘ</div>
<div class="t" style="left:309.16px;top:166.28px;font-size:100px;font-weight:bold;color:#000;transform:scale(0.3494,0.3613);transform-origin:0 0">ア</div>
<div class="t" style="left:344.82px;top:164.99px;font-size:100px;font-weight:bold;color:#000;transform:scale(0.3125,0.3627);transform-origin:0 0">カ</div>
<div class="t" style="left:373.16px;top:167.16px;font-size:100px;font-weight:bold;color:#000;transform:scale(0.3599,0.3494);transform-origin:0 0">ラ</div>
<div class="t" style="left:405.10px;top:168.13px;font-size:100px;font-weight:bold;color:#000;transform:scale(0.3721,0.3643);transform-origin:0 0">ー</div>
<div class="t" style="left:204.80px;top:323.51px;font-size:100px;font-weight:bold;color:#fff;transform:scale(0.2939,0.2901);transform-origin:0 0">上</div>
<div class="t" style="left:238.47px;top:315.51px;font-size:100px;font-weight:bold;color:#fff;transform:scale(0.2733,0.3860);transform-origin:0 0">ヘ</div>
<div class="t" style="left:267.16px;top:319.96px;font-size:100px;font-weight:bold;color:#fff;transform:scale(0.3047,0.3362);transform-origin:0 0">ア</div>
<div class="t" style="left:297.58px;top:318.89px;font-size:100px;font-weight:bold;color:#fff;transform:scale(0.2862,0.3313);transform-origin:0 0">カ</div>
<div class="t" style="left:324.62px;top:321.95px;font-size:100px;font-weight:bold;color:#fff;transform:scale(0.3092,0.3118);transform-origin:0 0">ラ</div>
<div class="t" style="left:351.42px;top:326.10px;font-size:100px;font-weight:bold;color:#fff;transform:scale(0.3407,0.2500);transform-origin:0 0">ー</div>
<div class="t" style="left:197.30px;top:513.80px;font-size:100px;font-weight:bold;color:#000;transform:scale(0.2806,0.2879);transform-origin:0 0">下</div>
<div class="t" style="left:230.37px;top:509.74px;font-size:100px;font-weight:bold;color:#000;transform:scale(0.2703,0.3400);transform-origin:0 0">ヘ</div>
<div class="t" style="left:258.40px;top:511.98px;font-size:100px;font-weight:bold;color:#000;transform:scale(0.3000,0.3150);transform-origin:0 0">ア</div>
<div class="t" style="left:289.63px;top:510.19px;font-size:100px;font-weight:bold;color:#000;transform:scale(0.2788,0.3241);transform-origin:0 0">カ</div>
<div class="t" style="left:315.33px;top:512.06px;font-size:100px;font-weight:bold;color:#000;transform:scale(0.3243,0.3106);transform-origin:0 0">ラ</div>
<div class="t" style="left:342.12px;top:515.53px;font-size:100px;font-weight:bold;color:#000;transform:scale(0.3547,0.2643);transform-origin:0 0">ー</div>
<div class="t" style="left:204.30px;top:684.82px;font-size:100px;font-weight:bold;color:#000;transform:scale(0.2898,0.2835);transform-origin:0 0">上</div>
<div class="t" style="left:238.82px;top:682.73px;font-size:100px;font-weight:bold;color:#000;transform:scale(0.2802,0.3138);transform-origin:0 0">ハ</div>
<div class="t" style="left:269.71px;top:682.38px;font-size:100px;font-weight:bold;color:#000;transform:scale(0.2787,0.3022);transform-origin:0 0">イ</div>
<div class="t" style="left:294.66px;top:683.09px;font-size:100px;font-weight:bold;color:#000;transform:scale(0.3158,0.3082);transform-origin:0 0">ラ</div>
<div class="t" style="left:324.17px;top:682.38px;font-size:100px;font-weight:bold;color:#000;transform:scale(0.2862,0.3022);transform-origin:0 0">イ</div>
<div class="t" style="left:340.23px;top:682.71px;font-size:100px;font-weight:bold;color:#000;transform:scale(0.3864,0.2989);transform-origin:0 0">ト</div>
<div class="t" style="left:199.80px;top:853.80px;font-size:100px;font-weight:bold;color:#000;transform:scale(0.2939,0.2879);transform-origin:0 0">下</div>
<div class="t" style="left:234.36px;top:852.61px;font-size:100px;font-weight:bold;color:#000;transform:scale(0.2901,0.3034);transform-origin:0 0">ハ</div>
<div class="t" style="left:265.25px;top:851.34px;font-size:100px;font-weight:bold;color:#000;transform:scale(0.2900,0.3056);transform-origin:0 0">イ</div>
<div class="t" style="left:290.93px;top:852.06px;font-size:100px;font-weight:bold;color:#000;transform:scale(0.3079,0.3106);transform-origin:0 0">ラ</div>
<div class="t" style="left:319.73px;top:851.38px;font-size:100px;font-weight:bold;color:#000;transform:scale(0.2931,0.3022);transform-origin:0 0">イ</div>
<div class="t" style="left:334.79px;top:851.67px;font-size:100px;font-weight:bold;color:#000;transform:scale(0.3989,0.3023);transform-origin:0 0">ト</div>
<svg class="a" style="left:0;top:0" width="545" height="942"><polygon points="150.55,169.40 154.67,181.18 167.20,181.43 157.21,188.97 160.84,200.90 150.55,193.78 140.26,200.90 143.89,188.97 133.90,181.43 146.43,181.18" fill="#000"></polygon><polygon points="185.80,323.80 189.36,334.19 200.20,334.42 191.56,341.07 194.70,351.60 185.80,345.31 176.90,351.60 180.04,341.07 171.40,334.42 182.24,334.19" fill="#fff"></polygon><polygon points="177.82,514.40 181.27,524.68 191.75,524.90 183.39,531.48 186.43,541.90 177.82,535.68 169.22,541.90 172.25,531.48 163.90,524.90 174.38,524.68" fill="#000"></polygon><polygon points="185.30,685.10 188.74,695.20 199.20,695.41 190.86,701.87 193.89,712.10 185.30,706.00 176.71,712.10 179.74,701.87 171.40,695.41 181.86,695.20" fill="#000"></polygon><polygon points="181.10,853.80 184.59,864.19 195.20,864.42 186.74,871.07 189.81,881.60 181.10,875.31 172.39,881.60 175.46,871.07 167.00,864.42 177.61,864.19" fill="#000"></polygon></svg>
<div class="a" style="left:530px;top:104px;width:12px;height:823px;background:#444444;"></div>
<div class="a" style="left:532px;top:350px;width:10px;height:318px;border-radius:5px;background:#5a5a5a"></div>
<div class="a" style="left:531px;top:916px;width:11px;height:11px;background:#5a5a5a;"></div>
<svg class="a" style="left:531px;top:916px" width="11" height="11"><path d="M2 4l3.5 3.5L9 4" stroke="#d0d0d0" fill="none" stroke-width="1.5"></path></svg>
<div class="a" style="left:3px;top:927px;width:539px;height:15px;background:#2e2e2e;"></div>
<div class="a" style="left:3px;top:927px;width:539px;height:12px;background:#3c3c3c;"></div>
<svg class="a" style="left:0;top:927px" width="545" height="12"><rect x="3" y="0" width="539" height="12" fill="#3e3e3e"></rect><rect x="4" y="1" width="53" height="10" fill="#3a3a3a"></rect><path d="M20 11 L56 2 L56 11Z" fill="#565656"></path><rect x="56" y="1" width="3" height="10" fill="#5a5a5a"></rect><rect x="59" y="1" width="38" height="10" fill="#333"></rect><path d="M60 11 L96 3 L96 11Z" fill="#3e3e3e"></path><rect x="97" y="1" width="61" height="10" fill="#474747"></rect><path d="M105 6h8" stroke="#999" stroke-width="1.5"></path><path d="M125 6h8M129 2v8" stroke="#999" stroke-width="1.5"></path><rect x="144" y="2" width="6" height="7" fill="#b8b8b8"></rect><rect x="158" y="1" width="44" height="10" fill="#333"></rect><path d="M175 11 L201 6 L201 11Z" fill="#3e3e3e"></path><rect x="202" y="1" width="3" height="10" fill="#5a5a5a"></rect><rect x="205" y="1" width="45" height="10" fill="#484848"></rect><path d="M205 11 L220 3 L236 3 L250 11Z" fill="#333"></path><path d="M258.5 9v-2a3.5 3.5 0 0 1 7 0v2" stroke="#bbb" fill="none" stroke-width="1.4"></path><path d="M256 7l2.5 3 2.5-3" fill="#bbb"></path><path d="M276.5 9v-2a3.5 3.5 0 0 1 7 0v2" stroke="#bbb" fill="none" stroke-width="1.4"></path><path d="M281 7l2.5 3 2.5-3" fill="#bbb"></path><circle cx="299.5" cy="6" r="4.2" stroke="#bbb" fill="none" stroke-width="1.2"></circle><circle cx="299.5" cy="6.5" r="1.5" fill="#bbb"></circle><path d="M299.5 1.5v3" stroke="#bbb"></path><rect x="309" y="1" width="11" height="10" fill="#4a4a4a"></rect><path d="M316 3l-3 3 3 3" stroke="#ccc" fill="none" stroke-width="1.2"></path><rect x="378" y="1" width="83" height="10" rx="5" fill="#555"></rect><rect x="519" y="1" width="11" height="10" fill="#4a4a4a"></rect><path d="M523 3l3 3-3 3" stroke="#ccc" fill="none" stroke-width="1.2"></path><rect x="530" y="0" width="12" height="12" fill="#3a3a3a"></rect></svg>
<div class="t" style="left: 6px; top: 928px; font-size: 12px; color: rgb(232, 232, 232); --w: 19; transform-origin: 0px 0px; transform: scaleX(0.813378);">87.5</div>
<div class="t" style="left: 163px; top: 928px; font-size: 12px; color: rgb(232, 232, 232); --w: 13; transform-origin: 0px 0px; transform: scaleX(0.779026);">0.0</div>
<div class="a" style="left:542px;top:44px;width:3px;height:898px;background:#343434;"></div>
<div class="a" style="left:545px;top:44px;width:479px;height:19px;background:#393939;"></div>
<svg class="a" style="left:545px;top:44px" width="479" height="19" fill="none" stroke="#8a8a8a" stroke-width="1.2"><path d="M3.5 5v10"></path><path d="M6.5 5v10"></path><path d="M9.5 5v10"></path><path d="M251 6l4 4-4 4"></path><path d="M273 6l4 4-4 4"></path><path d="M278 6l4 4-4 4"></path><path d="M287 5v10"></path><path d="M290 5v10"></path><path d="M293 5v10"></path><path d="M310 6l4 4-4 4"></path><path d="M315 6l4 4-4 4"></path><path d="M323.5 5v10"></path><path d="M326.5 5v10"></path><path d="M329.5 5v10"></path><path d="M333 6l4 4-4 4"></path><path d="M354 6l4 4-4 4"></path><path d="M359 6l4 4-4 4"></path><path d="M371 6l-4 4 4 4"></path><path d="M376 6l-4 4 4 4"></path><path d="M384 6l-4 4 4 4"></path><path d="M389 6l-4 4 4 4"></path><path d="M394.5 5v10"></path><path d="M397.5 5v10"></path><path d="M400.5 5v10"></path></svg>
<div class="a" style="left:545px;top:63px;width:283px;height:17px;background:#393939;"></div>
<div class="a" style="left:545px;top:80px;width:283px;height:859px;background:#4b4b4b;"></div>
<div class="a" style="left:828px;top:63px;width:2px;height:879px;background:#2f2f2f;"></div>
<div class="a" style="left:676px;top:937px;width:18px;height:1px;background:repeating-linear-gradient(90deg,#777 0 1px,transparent 1px 3px)"></div>
<div class="a" style="left:545px;top:64px;width:17px;height:16px;background:#353535;"></div>
<svg class="a" style="left:548px;top:66px" width="12" height="12"><path d="M3.5 3.5h6.5M3.5 6.5h6.5M3.5 9.5h6.5" stroke="#8e8e8e" stroke-width="1.7"></path></svg>
<div class="a" style="left:562px;top:67px;width:56px;height:13px;background:#4b4b4b;"></div>
<svg class="a" style="left:567px;top:67px" width="16" height="16" fill="none" stroke="#cfcfcf" stroke-width="1.2"><path d="M8 1l6 3.5-6 3.5-6-3.5z"></path><path d="M2 7.5l6 3.5 6-3.5"></path><path d="M2 10.5l6 3.5 6-3.5"></path></svg>
<div class="t" style="left: 589px; top: 70px; font-size: 11px; color: rgb(224, 224, 224); --w: 26; transform-origin: 0px 0px; transform: scaleX(0.590909);">レイヤー</div>
<div class="a" style="left:619px;top:67px;width:76px;height:13px;background:#444444;"></div>
<svg class="a" style="left:625px;top:68px" width="16" height="13" fill="none" stroke="#6c6c6c" stroke-width="1.2"><path d="M2 6l6-4 6 4-6 4z"></path><path d="M4 11h8"></path></svg>
<div class="t" style="left: 646px; top: 70px; font-size: 11px; color: rgb(112, 112, 112); --w: 48; transform-origin: 0px 0px; transform: scaleX(0.727273);">レイヤー検索</div>
<div class="a" style="left:697px;top:67px;width:62px;height:13px;background:#444444;"></div>
<svg class="a" style="left:703px;top:68px" width="16" height="13" fill="none" stroke="#6c6c6c" stroke-width="1.2"><path d="M4 3h7a3 3 0 0 1 0 6H3"></path><path d="M5 1l-2 2 2 2"></path></svg>
<div class="t" style="left: 724px; top: 70px; font-size: 11px; color: rgb(112, 112, 112); --w: 34; transform-origin: 0px 0px; transform: scaleX(0.618182);">ヒストリー</div>
<div class="a" style="left:546px;top:85px;width:36px;height:19px;background:#4e4e4e;border:1px solid #525252"></div>
<div class="a" style="left:549px;top:87px;width:15px;height:15px;border:1px solid #6a6a6a"></div>
<svg class="a" style="left:568px;top:89px" width="10" height="8"><path d="M1 2l4 4 4-4" stroke="#666" fill="none" stroke-width="1.2"></path></svg>
<div class="a" style="left:585px;top:85px;width:100px;height:19px;background:#4e4e4e;border:1px solid #545454"></div>
<div class="t" style="left: 617px; top: 88px; font-size: 13px; color: rgb(110, 110, 110); --w: 21; transform-origin: 0px 0px; transform: scaleX(0.807692);">通常</div>
<svg class="a" style="left:670px;top:89px" width="10" height="8"><path d="M1 2l4 4 4-4" stroke="#666" fill="none" stroke-width="1.2"></path></svg>
<div class="a" style="left:691px;top:89px;width:98px;height:9px;background:repeating-linear-gradient(90deg,#7a7a7a 0 4px,#6c6c6c 4px 8px)"></div>
<div class="a" style="left:691px;top:93px;width:98px;height:5px;background:repeating-linear-gradient(90deg,#6c6c6c 0 4px,#7a7a7a 4px 8px)"></div>
<div class="a" style="left:790px;top:86px;width:2px;height:17px;background:#5c5c5c;"></div>
<div class="t" style="left: 798px; top: 90px; font-size: 11px; color: rgb(136, 136, 136); --w: 15; font-family: &quot;Liberation Mono&quot;, monospace; transform-origin: 0px 0px; transform: scaleX(0.757098);">100</div>
<svg class="a" style="left:816px;top:88px" width="9" height="14" fill="none" stroke="#777" stroke-width="1.1"><path d="M1 5l3.5-3.5L8 5M1 9l3.5 3.5L8 9"></path></svg>
<svg class="a" style="left:545px;top:104px" width="283" height="22" fill="none" stroke="#606060" stroke-width="1.3"><rect x="89" y="4" width="9" height="10" stroke-dasharray="2 1"></rect><rect x="85.5" y="7.5" width="9" height="10" fill="#5c5c5c"></rect><path d="M108 17l3-9 3 9z" fill="#606060"></path><path d="M104 7h14M106 4l-2-2M116 4l2-2M111 3v2"></path><path d="M124 3h7v10l-3 4h-4z"></path><path d="M127 9c1-2 3-2 3 0s-2 3-3 4"></path><path d="M131 15l5 2"></path><rect x="144" y="9" width="10" height="8" fill="#626262" stroke="none"></rect><path d="M146 9v-3a3 3 0 0 1 6 0v3"></path><rect x="161" y="11" width="8" height="7" fill="#626262" stroke="none"></rect><path d="M163 11v-2a2 2 0 0 1 4 0v2"></path><rect x="166" y="3" width="3" height="3" fill="#626262" stroke="none"></rect><rect x="171" y="6" width="3" height="3" fill="#626262" stroke="none"></rect><rect x="171" y="12" width="3" height="3" fill="#626262" stroke="none"></rect><rect x="168" y="9" width="3" height="3" fill="#626262" stroke="none"></rect><g stroke="#575757"><circle cx="189" cy="10" r="6" stroke-width="2.5"></circle><path d="M190 12l6 6M196 12l-6 6"></path><path d="M201 9l3.5 3.5 3.5-3.5"></path></g><g stroke="#575757"><path d="M218 17l10-14M218 3h12v14"></path><path d="M225 12l5 5M230 12l-5 5"></path><path d="M237 9l3.5 3.5 3.5-3.5"></path></g></svg>
<div class="a" style="left:794px;top:106px;width:33px;height:18px;background:#505050;border:1px solid #575757"></div>
<div class="a" style="left:798px;top:109px;width:10px;height:10px;background:#4a6aa8;"></div>
<div class="a" style="left:803px;top:114px;width:9px;height:8px;background:#8a8a8a;"></div>
<svg class="a" style="left:814px;top:111px" width="10" height="8"><path d="M1 2l4 4 4-4" stroke="#666" fill="none" stroke-width="1.2"></path></svg>
<div class="a" style="left:545px;top:127px;width:18px;height:19px;background:#535866;"></div>
<svg class="a" style="left:547px;top:130px" width="14" height="13" fill="none" stroke="#6c7280" stroke-width="1.2"><rect x="1" y="1" width="12" height="11"></rect><path d="M1 6.5h12M5 1v11"></path></svg>
<svg class="a" style="left:545px;top:126px" width="283" height="22" fill="none" stroke="#636363" stroke-width="1.3"><rect x="133" y="3" width="12" height="12"></rect><circle cx="145" cy="16" r="3.3" fill="#4b4b4b" stroke-width="1.1"></circle><path d="M143.2 16h3.6M145 14.2v3.6" stroke-width="1.1"></path><rect x="151" y="3" width="12" height="12"></rect><circle cx="157" cy="9" r="3"></circle><circle cx="163" cy="16" r="3.3" fill="#4b4b4b" stroke-width="1.1"></circle><path d="M161.2 16h3.6M163 14.2v3.6" stroke-width="1.1"></path><path d="M168 5h5l1.5 2h6v9h-12.5z" fill="#636363"></path><circle cx="181" cy="16" r="3.3" fill="#4b4b4b" stroke-width="1.1"></circle><path d="M179.2 16h3.6M181 14.2v3.6" stroke-width="1.1"></path><g stroke="#575757"><rect x="189" y="7" width="9" height="10"></rect><rect x="193" y="3" width="9" height="10"></rect></g><g stroke="#575757"><rect x="208" y="9" width="8" height="9"></rect><rect x="213" y="3" width="9" height="9"></rect></g><rect x="227" y="3" width="14" height="14" fill="#696969" stroke="none"></rect><circle cx="234" cy="10" r="4.2" fill="#4b4b4b" stroke="none"></circle><g stroke="#575757"><rect x="247" y="5" width="15" height="12"></rect><circle cx="254.5" cy="11" r="3"></circle><path d="M251 5v-2h7v2"></path></g><g stroke="#575757"><rect x="268" y="6" width="10" height="12"></rect><path d="M266 5h14M271 3h4M271 8v8M275 8v8"></path></g></svg>
<div class="a" style="left:545px;top:149px;width:283px;height:1px;background:#444;"></div>
<div class="a" style="left:563px;top:150px;width:1px;height:38px;background:#444;"></div>
<div class="a" style="left:580px;top:150px;width:1px;height:38px;background:#444;"></div>
<div class="a" style="left:581px;top:150px;width:234px;height:38px;background:#575a66;"></div>
<div class="a" style="left:545px;top:188px;width:283px;height:1px;background:#444;"></div>
<svg class="a" style="left:547px;top:162px" width="16" height="12"><path d="M1 6c3-4 11-4 14 0-3 4-11 4-14 0z" fill="#707070"></path><circle cx="8" cy="6" r="2.6" fill="#4b4b4b"></circle><circle cx="8" cy="6" r="1.6" fill="#707070"></circle></svg>
<svg class="a" style="left:563px;top:161px" width="16" height="16"><path d="M3 12l8-8 2 2-8 8-3 1z" fill="#727272"></path><path d="M2 15h13" stroke="#727272" stroke-width="1.4"></path></svg>
<div class="a" style="left:585px;top:151px;width:29px;height:36px;border:1.5px solid #888;background:#4e4e4e"></div>
<div class="a" style="left:592px;top:154px;width:15px;height:30px;background:linear-gradient(180deg,#4d6a64 0,#4d6a64 5px,#3e4a4c 5px,#3e4a4c 10px,#8a7878 10px,#867a74 22px,#7e8070 30px)"></div>
<div class="a" style="left:595px;top:159px;width:9px;height:20px;background:repeating-linear-gradient(180deg,transparent 0 5px,rgba(60,50,50,.35) 5px 6px)"></div>
<div class="t" style="left: 620px; top: 154px; font-size: 11px; color: rgb(138, 138, 138); --w: 50; transform-origin: 0px 0px; transform: scaleX(0.939794);">100 %通常</div>
<div class="t" style="left: 620px; top: 173px; font-size: 11px; color: rgb(138, 138, 138); --w: 59; transform-origin: 0px 0px; transform: scaleX(0.766234);">★カラーリスト</div>
<div class="a" style="left:830px;top:63px;width:35px;height:17px;background:#393939;"></div>
<div class="a" style="left:830px;top:80px;width:35px;height:859px;background:#4a4a4a;"></div>
<div class="a" style="left:865px;top:63px;width:2px;height:879px;background:#2f2f2f;"></div>
<div class="a" style="left:830px;top:64px;width:17px;height:16px;background:#353535;"></div>
<svg class="a" style="left:833px;top:66px" width="12" height="12"><path d="M3.5 3.5h6.5M3.5 6.5h6.5M3.5 9.5h6.5" stroke="#8e8e8e" stroke-width="1.7"></path></svg>
<div class="a" style="left:848px;top:67px;width:17px;height:13px;background:#4b4b4b;"></div>
<svg class="a" style="left:848px;top:66px" width="17" height="18"><path d="M3 15l1-4 9-9 3 3-9 9z" fill="#bdbdbd"></path><path d="M3 15l1-4 3 3z" fill="#eee"></path></svg>
<svg class="a" style="left:830px;top:80px" width="35" height="859" fill="none" stroke="#6a6a6a" stroke-width="1.3"><circle cx="15" cy="15" r="6"></circle><path d="M19.5 19.5l5 5"></path><path d="M11 46v-8M14 45v-10M17 45v-10M20 45v-8M23 44l2-4M11 46c0 4 3 6 6 6s6-3 8-8" fill="#626262"></path><path d="M8 60l7-4 7 4v8l-7 4-7-4z"></path><path d="M8 60l7 4 7-4M15 64v8"></path><path d="M18 66l9 4-4 1 3 4-2 1-3-4-2 3z" fill="#6a6a6a" stroke="none"></path><path d="M17 80v17M8.5 88.5h17M14 83l3-3 3 3M14 94l3 3 3-3M11.5 85.5l-3 3 3 3M22.5 85.5l3 3-3 3"></path><rect x="9.5" y="104.5" width="15" height="14" stroke-dasharray="2 2"></rect><path d="M7 147l11-11"></path><path d="M21 125l1.5 4.5 4.5 0-3.5 3 1.5 4.5-4-2.5-4 2.5 1.5-4.5-3.5-3 4.5 0z" fill="#6a6a6a" stroke="none"></path><path d="M8 168l10-10 3 3-10 10-3 0z"></path><path d="M18 155l4-3 3 3-3 4"></path><path d="M3 172.5h29" stroke="#555" stroke-width="1"></path></svg>
<div class="a" style="left:835px;top:256px;width:22px;height:22px;background:#58595f;border:1px solid #606168"></div>
<svg class="a" style="left:830px;top:250px" width="35" height="110" fill="none" stroke="#6a6a6a" stroke-width="1.3"><path d="M10 24l8-8 6 6-8 8z" fill="#6a6a6a"></path><path d="M10 24l-2 4"></path><path d="M8 50l12-12a3 3 0 0 1 4 4l-12 12z"></path><path d="M9 72l10-10M17 60l3-3 3 3-3 3z" fill="#6a6a6a"></path><rect x="9" y="90" width="16" height="8" rx="2"></rect><path d="M9 94h16"></path></svg>
<svg class="a" style="left:830px;top:540px" width="35" height="140" fill="none" stroke="#6c6c6c" stroke-width="1.6"><path d="M8.5 25L15.5 8.5 22.5 25M11.5 19h8" stroke-width="2"></path><ellipse cx="17" cy="39" rx="8.5" ry="5.5" stroke-width="1.3"></ellipse><path d="M11 43l-2 5 5-3" stroke-width="1.3"></path><path d="M9 60v16M9 60h15" stroke-width="1.2"></path><rect x="7" y="58" width="4" height="4" fill="#6c6c6c"></rect><path d="M14 64l8 4-4 1-1 4z" fill="#6c6c6c" stroke="none"></path></svg>
<div class="a" style="left:845px;top:632px;width:16px;height:15px;border:1px solid #555;border-radius:2px;background:#7a7a7a"></div>
<div class="a" style="left:832px;top:619px;width:18px;height:19px;border:2px solid #5b6072;border-radius:3px;background:#787878;box-shadow:inset 0 0 0 1px #4a4a4a"></div>
<div class="a" style="left:833px;top:654px;width:28px;height:7px;border-radius:3px;border:1px solid #555;background:repeating-linear-gradient(90deg,#8a8a8a 0 4px,#555 4px 6px)"></div>
<div class="a" style="left:867px;top:63px;width:42px;height:17px;background:#393939;"></div>
<div class="a" style="left:867px;top:80px;width:42px;height:859px;background:#4a4a4a;"></div>
<div class="a" style="left:867px;top:64px;width:17px;height:16px;background:#353535;"></div>
<svg class="a" style="left:870px;top:66px" width="12" height="12"><path d="M3.5 3.5h6.5M3.5 6.5h6.5M3.5 9.5h6.5" stroke="#8e8e8e" stroke-width="1.7"></path></svg>
<div class="a" style="left:885px;top:67px;width:24px;height:13px;background:#4b4b4b;"></div>
<svg class="a" style="left:887px;top:65px" width="22" height="20"><path d="M3 15l1-4 9-9 3 3-9 9z" fill="#bdbdbd"></path><circle cx="15" cy="13" r="4.5" fill="#4b4b4b" stroke="#bdbdbd" stroke-width="1"></circle><circle cx="15" cy="13" r="2" fill="none" stroke="#bdbdbd"></circle></svg>
<div class="a" style="left:867px;top:80px;width:29px;height:859px;background:#474747;"></div>
<div class="a" style="left:896px;top:80px;width:13px;height:859px;background:#4e4e4e;"></div>
<div class="a" style="left:897px;top:380px;width:11px;height:178px;border-radius:5px;background:#575757"></div>
<svg class="a" style="left:897px;top:86px" width="11" height="10"><path d="M2 7l3.5-3.5L9 7" stroke="#5e5e5e" fill="none" stroke-width="1.3"></path></svg>
<div class="a" style="left:867px;top:122px;width:29px;height:1px;background:#404040;"></div>
<div class="a" style="left:880.8px;top:99.1px;width:1.4px;height:1.4px;overflow:hidden"><div style="width:1.4px;height:1.4px;border-radius:50%;background:#7c7c7c"></div></div>
<div class="t" style="left:867px;width:29px;text-align:center;top:109.3px;font-size:12px;color:#9a9a9a;transform:scaleX(0.78)">0.7</div>
<div class="a" style="left:867px;top:160px;width:29px;height:1px;background:#404040;"></div>
<div class="a" style="left:880.7px;top:137.2px;width:1.6px;height:1.6px;overflow:hidden"><div style="width:1.6px;height:1.6px;border-radius:50%;background:#7c7c7c"></div></div>
<div class="t" style="left:867px;width:29px;text-align:center;top:147.5px;font-size:12px;color:#9a9a9a;transform:scaleX(0.78)">1</div>
<div class="a" style="left:867px;top:198px;width:29px;height:1px;background:#404040;"></div>
<div class="a" style="left:880.5px;top:175.2px;width:2.0px;height:2.0px;overflow:hidden"><div style="width:2.0px;height:2.0px;border-radius:50%;background:#7c7c7c"></div></div>
<div class="t" style="left:867px;width:29px;text-align:center;top:185.7px;font-size:12px;color:#9a9a9a;transform:scaleX(0.78)">1.5</div>
<div class="a" style="left:867px;top:237px;width:29px;height:1px;background:#404040;"></div>
<div class="a" style="left:880.4px;top:213.3px;width:2.2px;height:2.2px;overflow:hidden"><div style="width:2.2px;height:2.2px;border-radius:50%;background:#7c7c7c"></div></div>
<div class="t" style="left:867px;width:29px;text-align:center;top:223.9px;font-size:12px;color:#9a9a9a;transform:scaleX(0.78)">2</div>
<div class="a" style="left:867px;top:275px;width:29px;height:1px;background:#404040;"></div>
<div class="a" style="left:880.3px;top:250.9px;width:2.4px;height:2.4px;overflow:hidden"><div style="width:2.4px;height:2.4px;border-radius:50%;background:#7c7c7c"></div></div>
<div class="t" style="left:867px;width:29px;text-align:center;top:262.1px;font-size:12px;color:#9a9a9a;transform:scaleX(0.78)">2.5</div>
<div class="a" style="left:867px;top:313px;width:29px;height:1px;background:#404040;"></div>
<div class="a" style="left:880.2px;top:288.5px;width:2.6px;height:2.6px;overflow:hidden"><div style="width:2.6px;height:2.6px;border-radius:50%;background:#7c7c7c"></div></div>
<div class="t" style="left:867px;width:29px;text-align:center;top:300.3px;font-size:12px;color:#9a9a9a;transform:scaleX(0.78)">3</div>
<div class="a" style="left:867px;top:351px;width:29px;height:1px;background:#404040;"></div>
<div class="a" style="left:880.0px;top:325.5px;width:3.0px;height:3.0px;overflow:hidden"><div style="width:3.0px;height:3.0px;border-radius:50%;background:#7c7c7c"></div></div>
<div class="t" style="left:867px;width:29px;text-align:center;top:338.5px;font-size:12px;color:#9a9a9a;transform:scaleX(0.78)">4</div>
<div class="a" style="left:867px;top:389px;width:29px;height:1px;background:#404040;"></div>
<div class="a" style="left:879.5px;top:364.2px;width:4.0px;height:4.0px;overflow:hidden"><div style="width:4.0px;height:4.0px;border-radius:50%;background:#7c7c7c"></div></div>
<div class="t" style="left:867px;width:29px;text-align:center;top:376.7px;font-size:12px;color:#9a9a9a;transform:scaleX(0.78)">5</div>
<div class="a" style="left:867px;top:428px;width:29px;height:1px;background:#404040;"></div>
<div class="a" style="left:879.2px;top:402.1px;width:4.6px;height:4.6px;overflow:hidden"><div style="width:4.6px;height:4.6px;border-radius:50%;background:#7c7c7c"></div></div>
<div class="t" style="left:867px;width:29px;text-align:center;top:414.9px;font-size:12px;color:#9a9a9a;transform:scaleX(0.78)">6</div>
<div class="a" style="left:867px;top:466px;width:29px;height:1px;background:#404040;"></div>
<div class="a" style="left:878.8px;top:439.9px;width:5.4px;height:5.4px;overflow:hidden"><div style="width:5.4px;height:5.4px;border-radius:50%;background:#7c7c7c"></div></div>
<div class="t" style="left:867px;width:29px;text-align:center;top:453.1px;font-size:12px;color:#9a9a9a;transform:scaleX(0.78)">7</div>
<div class="a" style="left:867px;top:504px;width:29px;height:1px;background:#404040;"></div>
<div class="a" style="left:878.5px;top:477.8px;width:6.0px;height:6.0px;overflow:hidden"><div style="width:6.0px;height:6.0px;border-radius:50%;background:#7c7c7c"></div></div>
<div class="t" style="left:867px;width:29px;text-align:center;top:491.3px;font-size:12px;color:#9a9a9a;transform:scaleX(0.78)">8</div>
<div class="a" style="left:867px;top:542px;width:29px;height:1px;background:#404040;"></div>
<div class="a" style="left:877.7px;top:516.2px;width:7.6px;height:7.6px;overflow:hidden"><div style="width:7.6px;height:7.6px;border-radius:50%;background:#7c7c7c"></div></div>
<div class="t" style="left:867px;width:29px;text-align:center;top:529.5px;font-size:12px;color:#9a9a9a;transform:scaleX(0.78)">10</div>
<div class="a" style="left:867px;top:580px;width:29px;height:1px;background:#404040;"></div>
<div class="a" style="left:876.8px;top:554.3px;width:9.4px;height:9.4px;overflow:hidden"><div style="width:9.4px;height:9.4px;border-radius:50%;background:#7c7c7c"></div></div>
<div class="t" style="left:867px;width:29px;text-align:center;top:567.7px;font-size:12px;color:#9a9a9a;transform:scaleX(0.78)">12</div>
<div class="a" style="left:867px;top:619px;width:29px;height:1px;background:#404040;"></div>
<div class="a" style="left:874.5px;top:590.0px;width:14.0px;height:14.0px;overflow:hidden"><div style="width:14.0px;height:14.0px;border-radius:50%;background:#7c7c7c"></div></div>
<div class="t" style="left:867px;width:29px;text-align:center;top:605.9px;font-size:12px;color:#9a9a9a;transform:scaleX(0.78)">15</div>
<div class="a" style="left:867px;top:657px;width:29px;height:1px;background:#404040;"></div>
<div class="a" style="left:873.4px;top:626.9px;width:16.2px;height:16.2px;overflow:hidden"><div style="width:16.2px;height:16.2px;border-radius:50%;background:#7c7c7c"></div></div>
<div class="t" style="left:867px;width:29px;text-align:center;top:644.1px;font-size:12px;color:#9a9a9a;transform:scaleX(0.78)">17</div>
<div class="a" style="left:867px;top:695px;width:29px;height:1px;background:#404040;"></div>
<div class="a" style="left:872.2px;top:662.7px;width:18.6px;height:18.6px;overflow:hidden"><div style="width:18.6px;height:18.6px;border-radius:50%;background:#7c7c7c"></div></div>
<div class="t" style="left:867px;width:29px;text-align:center;top:682.3px;font-size:12px;color:#9a9a9a;transform:scaleX(0.78)">20</div>
<div class="a" style="left:867px;top:733px;width:29px;height:1px;background:#404040;"></div>
<div class="a" style="left:870.3px;top:699.8px;width:22.4px;height:22.2px;overflow:hidden"><div style="width:22.4px;height:22.4px;border-radius:50%;background:linear-gradient(180deg,#7c7c7c 0,#7c7c7c 18.5px,#6a6a6a 18.5px)"></div></div>
<div class="t" style="left:867px;width:29px;text-align:center;top:720.5px;font-size:12px;color:#9a9a9a;transform:scaleX(0.78)">25</div>
<div class="a" style="left:867px;top:771px;width:29px;height:1px;background:#404040;"></div>
<div class="a" style="left:870.3px;top:738.0px;width:22.4px;height:22.2px;overflow:hidden"><div style="width:22.4px;height:22.4px;border-radius:50%;background:linear-gradient(180deg,#7c7c7c 0,#7c7c7c 18.5px,#6a6a6a 18.5px)"></div></div>
<div class="t" style="left:867px;width:29px;text-align:center;top:758.7px;font-size:12px;color:#9a9a9a;transform:scaleX(0.78)">30</div>
<div class="a" style="left:867px;top:810px;width:29px;height:1px;background:#404040;"></div>
<div class="a" style="left:870.3px;top:776.2px;width:22.4px;height:22.2px;overflow:hidden"><div style="width:22.4px;height:22.4px;border-radius:50%;background:linear-gradient(180deg,#7c7c7c 0,#7c7c7c 18.5px,#6a6a6a 18.5px)"></div></div>
<div class="t" style="left:867px;width:29px;text-align:center;top:796.9px;font-size:12px;color:#9a9a9a;transform:scaleX(0.78)">40</div>
<div class="a" style="left:867px;top:848px;width:29px;height:1px;background:#404040;"></div>
<div class="a" style="left:870.3px;top:814.4px;width:22.4px;height:22.2px;overflow:hidden"><div style="width:22.4px;height:22.4px;border-radius:50%;background:linear-gradient(180deg,#7c7c7c 0,#7c7c7c 18.5px,#6a6a6a 18.5px)"></div></div>
<div class="t" style="left:867px;width:29px;text-align:center;top:835.1px;font-size:12px;color:#9a9a9a;transform:scaleX(0.78)">50</div>
<div class="a" style="left:867px;top:886px;width:29px;height:1px;background:#404040;"></div>
<div class="a" style="left:870.3px;top:852.6px;width:22.4px;height:22.2px;overflow:hidden"><div style="width:22.4px;height:22.4px;border-radius:50%;background:linear-gradient(180deg,#7c7c7c 0,#7c7c7c 18.5px,#6a6a6a 18.5px)"></div></div>
<div class="t" style="left:867px;width:29px;text-align:center;top:873.3px;font-size:12px;color:#9a9a9a;transform:scaleX(0.78)">60</div>
<div class="a" style="left:867px;top:924px;width:29px;height:1px;background:#404040;"></div>
<div class="a" style="left:870.3px;top:890.8px;width:22.4px;height:22.2px;overflow:hidden"><div style="width:22.4px;height:22.4px;border-radius:50%;background:linear-gradient(180deg,#7c7c7c 0,#7c7c7c 18.5px,#6a6a6a 18.5px)"></div></div>
<div class="t" style="left:867px;width:29px;text-align:center;top:911.5px;font-size:12px;color:#9a9a9a;transform:scaleX(0.78)">70</div>
<div class="a" style="left:867px;top:962px;width:29px;height:1px;background:#404040;"></div>
<div class="a" style="left:870.3px;top:929.0px;width:22.4px;height:22.2px;overflow:hidden"><div style="width:22.4px;height:22.4px;border-radius:50%;background:linear-gradient(180deg,#7c7c7c 0,#7c7c7c 18.5px,#6a6a6a 18.5px)"></div></div>
<div class="t" style="left:867px;width:29px;text-align:center;top:949.7px;font-size:12px;color:#9a9a9a;transform:scaleX(0.78)">80</div>
<svg class="a" style="left:897px;top:928px" width="11" height="10"><path d="M2 3l3.5 3.5L9 3" stroke="#5e5e5e" fill="none" stroke-width="1.3"></path></svg>
<div class="a" style="left:909px;top:63px;width:28px;height:879px;background:#3a3a3a;"></div>
<div class="a" style="left:936px;top:63px;width:1px;height:879px;background:#333;"></div>
<div class="a" style="left:937px;top:63px;width:87px;height:17px;background:#393939;"></div>
<div class="a" style="left:937px;top:64px;width:18px;height:16px;background:#353535;"></div>
<svg class="a" style="left:940px;top:66px" width="12" height="12"><path d="M3.5 3.5h6.5M3.5 6.5h6.5M3.5 9.5h6.5" stroke="#8e8e8e" stroke-width="1.7"></path></svg>
<div class="a" style="left:955px;top:67px;width:69px;height:13px;background:#4d4d4d;"></div>
<svg class="a" style="left:961px;top:67px" width="14" height="13" fill="none" stroke="#9a9a9a" stroke-width="1.1"><path d="M1 13V4a2 2 0 0 1 2-2h8a2 2 0 0 1 2 2v9"></path><rect x="4" y="5" width="7" height="8" fill="#666"></rect></svg>
<div class="t" style="left: 983px; top: 70px; font-size: 11px; color: rgb(140, 140, 140); --w: 40; transform-origin: 0px 0px; transform: scaleX(0.606061);">ナビゲーター</div>
<div class="a" style="left:937px;top:80px;width:87px;height:105px;background:#434343;"></div>
<div class="a" style="left:937px;top:80px;width:87px;height:5px;background:#4a4a4a;"></div>
<div class="a" style="left:937px;top:185px;width:87px;height:60px;background:#4a4a4a;"></div>
<div class="a" style="left:942px;top:192px;width:82px;height:11px;border:1px solid #555;background:linear-gradient(172deg,#4a4a4a 55%,#404040 55%)"></div>
<svg class="a" style="left:942px;top:210px" width="82" height="12"><rect x="0.5" y="0.5" width="49" height="10" fill="#494949" stroke="#545454"></rect><path d="M1 3 L10 10 L20 10 C26 2 36 2 40 10 L48 10 L48 2z" fill="#454545"></path><path d="M1 10 L10 10 L1 3z" fill="#444"></path><path d="M28 10 C30 4 36 3 44 10z" fill="#404040"></path><path d="M60 9a5 5 0 1 1 9-1" fill="none" stroke="#555" stroke-width="1.3"></path><path d="M58 6l2 3 3-2" fill="none" stroke="#555" stroke-width="1.2"></path><path d="M80 2a5 5 0 0 0 0 9" fill="none" stroke="#555" stroke-width="1.3"></path></svg>
<svg class="a" style="left:939px;top:228px" width="16" height="16"><path d="M1.5 14.5l1-3 7-7 2 2-7 7z" fill="none" stroke="#666" stroke-width="1.1"></path><path d="M9 3.5l2-2 1 1 1.5-1.5 1.5 1.5-1.5 1.5 1 1-2 2z" fill="#666"></path></svg>
<div class="a" style="left:937px;top:245px;width:87px;height:4px;background:#2f2f2f;"></div>
<div class="a" style="left:937px;top:249px;width:87px;height:15px;background:#393939;"></div>
<div class="a" style="left:937px;top:249px;width:18px;height:15px;background:#353535;"></div>
<svg class="a" style="left:940px;top:250px" width="12" height="12"><path d="M3.5 3.5h6.5M3.5 6.5h6.5M3.5 9.5h6.5" stroke="#8e8e8e" stroke-width="1.7"></path></svg>
<div class="a" style="left:955px;top:251px;width:69px;height:13px;background:#4b4b4b;"></div>
<svg class="a" style="left:962px;top:250px" width="20" height="16"><path d="M2 14l2-4 8-8 3 3-8 8z" fill="#c8c8c8"></path><rect x="10" y="10" width="8" height="5" fill="none" stroke="#c8c8c8" stroke-width="1.2"></rect></svg>
<div class="t" style="left: 983px; top: 253px; font-size: 11px; color: rgb(220, 220, 220); --w: 58; transform-origin: 0px 0px; transform: scaleX(0.697744);">サブツール[ペン]</div>
<div class="a" style="left:937px;top:264px;width:87px;height:188px;background:#4a4a4a;"></div>
<div class="a" style="left:940px;top:270px;width:75px;height:23px;background:#4f4f4f;border:1px solid #555"></div>
<svg class="a" style="left:942px;top:270px" width="60" height="23" fill="none" stroke="#6e6e6e" stroke-width="1.2"><path d="M4 20l3-9 9-7 4 4-7 9z"></path><path d="M4 20l5-5"></path></svg>
<div class="t" style="left: 968px; top: 275px; font-size: 12px; color: rgb(118, 118, 118); --w: 20; transform-origin: 0px 0px; transform: scaleX(0.833333);">ペン</div>
<div class="a" style="left:1017px;top:270px;width:7px;height:23px;background:#5a5f6c;"></div>
<div class="a" style="left:937px;top:294px;width:87px;height:1px;background:#444;"></div>
<div class="a" style="left:937px;top:317px;width:87px;height:1px;background:#444;"></div>
<div class="a" style="left:937px;top:340px;width:87px;height:1px;background:#444;"></div>
<svg class="a" style="left:937px;top:294px" width="87" height="160" fill="none"><path d="M15 14c20-10 40-8 55-1s20 3 20 3" stroke="#6e6e6e" stroke-width="1.3"></path><path d="M15 36c20-10 40-8 55-1s20 3 20 3" stroke="#727272" stroke-width="2"></path></svg>
<div class="a" style="left:937px;top:341px;width:87px;height:22px;background:#555a66;"></div>
<svg class="a" style="left:937px;top:341px" width="87" height="22"><path d="M6 24C18 8 38 2 56 9S80 16 92 14" stroke="#8a8a8a" stroke-width="9" fill="none"></path></svg>
<svg class="a" style="left:937px;top:363px" width="87" height="90" fill="none"><path d="M25 12c15-8 30-4 45 2s17 3 17 3" stroke="#6e6e6e" stroke-width="1.2"></path><path d="M25 35c15-8 30-4 45 2s17 3 17 3" stroke="#7a7a7a" stroke-width="1" stroke-dasharray="2 1"></path><path d="M35 55c15-3 25 2 40 6" stroke="#707070" stroke-width="3"></path></svg>
<div class="a" style="left:937px;top:386px;width:87px;height:1px;background:#444;"></div>
<div class="a" style="left:937px;top:409px;width:87px;height:1px;background:#444;"></div>
<div class="a" style="left:937px;top:433px;width:87px;height:1px;background:#444;"></div>
<div class="t" style="left:1016px;top:420px;font-size:11px;color:#6e6e6e;">ブラ</div>
<div class="a" style="left:937px;top:452px;width:87px;height:4px;background:#2f2f2f;"></div>
<div class="a" style="left:937px;top:456px;width:87px;height:17px;background:#393939;"></div>
<div class="a" style="left:955px;top:458px;width:69px;height:15px;background:#4b4b4b;"></div>
<svg class="a" style="left:962px;top:457px" width="20" height="16"><path d="M2 12l2-4 7-7 3 3-7 7z" fill="#c8c8c8"></path><circle cx="13" cy="11" r="3.5" fill="none" stroke="#c8c8c8" stroke-width="1.5" stroke-dasharray="1.5 1"></circle></svg>
<div class="t" style="left: 983px; top: 460px; font-size: 11px; color: rgb(220, 220, 220); --w: 72; transform-origin: 0px 0px; transform: scaleX(0.620022);">ツールプロパティ[ペン]</div>
<div class="a" style="left:937px;top:473px;width:87px;height:296px;background:#4a4a4a;"></div>
<div class="a" style="left:937px;top:473px;width:87px;height:38px;background:#505050;"></div>
<div class="a" style="left:937px;top:511px;width:87px;height:1px;background:#404040;"></div>
<div class="a" style="left:945px;top:541px;width:79px;height:1px;background:#555;"></div>
<svg class="a" style="left:937px;top:473px" width="87" height="40"><rect x="8" y="2" width="45" height="14" rx="2" fill="#555"></rect><path d="M24 33c14-22 40-30 63-24v14c-22-6-44 2-55 12z" fill="#6c6c6c"></path></svg>
<div class="t" style="left:958px;top:477px;font-size:11px;color:#6a6a6a;">鉛筆ペン</div>
<div class="t" style="left: 953px; top: 516px; font-size: 11px; color: rgb(110, 110, 110); --w: 55; transform-origin: 0px 0px; transform: scaleX(0.833333);">ブラシサイズ</div>
<div class="a" style="left:973px;top:529px;width:37px;height:6px;background:#4f4f4f;border:1px solid #555"></div>
<div class="t" style="left: 953px; top: 546px; font-size: 11px; color: rgb(113, 113, 113); --w: 44; transform-origin: 0px 0px; transform: scaleX(1);">不透明度</div>
<div class="t" style="left: 953px; top: 579px; font-size: 11px; color: rgb(113, 113, 113); --w: 49; transform-origin: 0px 0px; transform: scaleX(0.890909);">合成モード</div>
<div class="t" style="left: 953px; top: 606px; font-size: 11px; color: rgb(113, 113, 113); --w: 37; transform-origin: 0px 0px; transform: scaleX(0.560606);">アンチエイリ</div>
<div class="t" style="left: 953px; top: 632px; font-size: 11px; color: rgb(113, 113, 113); --w: 49; transform-origin: 0px 0px; transform: scaleX(0.890909);">手ブレ補正</div>
<div class="a" style="left:973px;top:560px;width:37px;height:6px;background:#4f4f4f;border:1px solid #555"></div>
<div class="a" style="left:973px;top:648px;width:37px;height:6px;background:#4f4f4f;border:1px solid #555"></div>
<div class="a" style="left:945px;top:571px;width:79px;height:1px;background:#555;"></div>
<div class="a" style="left:945px;top:597px;width:79px;height:1px;background:#555;"></div>
<div class="a" style="left:945px;top:626px;width:79px;height:1px;background:#555;"></div>
<div class="a" style="left:945px;top:656px;width:79px;height:1px;background:#555;"></div>
<div class="a" style="left:945px;top:681px;width:79px;height:1px;background:#555;"></div>
<div class="a" style="left:1007px;top:577px;width:17px;height:18px;background:#4e4e4e;border:1px solid #555"></div>
<div class="a" style="left:995px;top:601px;width:20px;height:23px;background:#596073;"></div>
<div class="a" style="left:1000px;top:607px;width:10px;height:10px;border-radius:50%;background:#6a6a6a"></div>
<div class="a" style="left:1018px;top:605px;width:12px;height:14px;border-radius:50%;background:#6e6e6e"></div>
<div class="a" style="left:953px;top:663px;width:13px;height:13px;background:#555;border:1px solid #5a5a5a"></div>
<div class="t" style="left: 971px; top: 664px; font-size: 11px; color: rgb(106, 106, 106); --w: 60; transform-origin: 0px 0px; transform: scaleX(0.606061);">参照レイヤーの設定</div>
<svg class="a" style="left:942px;top:684px" width="30" height="45" fill="none" stroke="#606060" stroke-width="1.2"><rect x="1" y="9.5" width="8" height="8"></rect><path d="M3 13.5h4"></path><path d="M5 17.5v22h6"></path><path d="M15 9l3 3 6-7"></path></svg>
<div class="t" style="left: 973px; top: 688px; font-size: 11px; color: rgb(108, 108, 108); --w: 44; transform-origin: 0px 0px; transform: scaleX(1);">領域拡縮</div>
<div class="a" style="left:973px;top:701px;width:37px;height:7px;background:#4f4f4f;border:1px solid #555"></div>
<div class="t" style="left: 970px; top: 720px; font-size: 11px; color: rgb(102, 102, 102); --w: 40; transform-origin: 0px 0px; transform: scaleX(0.909091);">拡縮方法</div>
<div class="a" style="left:1012px;top:716px;width:12px;height:18px;background:#4e4e4e;border:1px solid #555"></div>
<div class="a" style="left:937px;top:752px;width:87px;height:17px;background:#474747;"></div>
<div class="a" style="left:937px;top:769px;width:87px;height:4px;background:#2f2f2f;"></div>
<div class="a" style="left:937px;top:773px;width:87px;height:14px;background:#393939;"></div>
<div class="a" style="left:937px;top:773px;width:18px;height:14px;background:#353535;"></div>
<svg class="a" style="left:940px;top:774px" width="12" height="12"><path d="M3.5 3.5h6.5M3.5 6.5h6.5M3.5 9.5h6.5" stroke="#8e8e8e" stroke-width="1.7"></path></svg>
<div class="a" style="left:956px;top:775px;width:27px;height:12px;background:#464646;"></div>
<svg class="a" style="left:962px;top:776px" width="16" height="11" fill="none" stroke="#8a8a8a" stroke-width="1"><path d="M1 6l7-5 7 5-7 5z"></path></svg>
<svg class="a" style="left:989px;top:774px" width="14" height="14"><circle cx="7" cy="7" r="6" fill="none" stroke="#cfcfcf" stroke-width="1.4"></circle><rect x="4.5" y="4.5" width="5" height="5" fill="#cfcfcf"></rect></svg>
<div class="t" style="left:1010px;top:776px;font-size:11px;color:#dcdcdc;">カラー</div>
<div class="a" style="left:937px;top:787px;width:87px;height:152px;background:#4a4a4a;"></div>
<div class="a" style="left:951.5px;top:793.5px;width:131px;height:131px;border-radius:50%;background:conic-gradient(#868340 0deg,#4e864e 60deg,#3e8484 120deg,#4a4a8e 180deg,#763e90 225deg,#863e64 270deg,#883e42 300deg,#86583c 330deg,#868340 360deg);-webkit-mask:radial-gradient(circle,transparent 54.5px,#000 55.5px,#000 65px,transparent 65.8px)"></div>
<svg class="a" style="left:937px;top:787px" width="87" height="152"><defs><linearGradient id="sq" x1="0" y1="0" x2="1" y2="1"><stop offset="0" stop-color="#7e7272"></stop><stop offset="1" stop-color="#333030"></stop></linearGradient></defs><rect x="46" y="38" width="41" height="67" fill="url(#sq)"></rect><rect x="30.5" y="26.5" width="8.5" height="8.5" transform="rotate(45 35 31.4)" fill="#8a4a3e" stroke="#b0b0b0" stroke-width="1.3"></rect><circle cx="44" cy="38" r="4" fill="none" stroke="#a0a0a0" stroke-width="1.2"></circle><rect x="2" y="113" width="15" height="15" rx="3" fill="#777" stroke="#5b6070" stroke-width="1.5"></rect><rect x="11" y="122" width="13" height="13" rx="2" fill="#7a7a7a"></rect><rect x="3" y="140" width="26" height="8" rx="3" fill="none" stroke="#5a5a5a"></rect><rect x="8" y="142" width="16" height="4" fill="#6a6a6a"></rect><rect x="41" y="140" width="8" height="8" fill="none" stroke="#666"></rect><rect x="43" y="142" width="4" height="3" fill="#666"></rect><rect x="71" y="139" width="9" height="9" fill="none" stroke="#666"></rect><path d="M73 142h5M73 145h5" stroke="#666"></path></svg>
<div class="t" style="left: 994.5px; top: 925px; font-size: 13px; color: rgb(138, 138, 138); --w: 9.5; transform-origin: 0px 0px; transform: scaleX(0.656587);">12</div>
<div class="a" style="left:545px;top:63px;width:283px;height:4px;background:#343434;"></div>
<div class="a" style="left:830px;top:63px;width:35px;height:4px;background:#343434;"></div>
<div class="a" style="left:867px;top:63px;width:42px;height:4px;background:#343434;"></div>
<div class="a" style="left:937px;top:63px;width:87px;height:4px;background:#343434;"></div>
<div class="a" style="left:500px;top:358px;width:463px;height:183px;background:#3a3a3a;"></div>
<div class="a" style="left:503px;top:380px;width:457px;height:158px;background:#4e4e4e;"></div>
<div class="a" style="left:503px;top:361px;width:457px;height:19px;background:#383838;"></div>
<div class="t" style="left: 692px; top: 364px; font-size: 12px; color: rgb(200, 200, 200); --w: 79; transform-origin: 0px 0px; transform: scaleX(0.822917);">色相・彩度・明度</div>
<svg class="a" style="left:946px;top:364px" width="11" height="11"><path d="M1 1l9 9M10 1l-9 9" stroke="#cfcfcf" stroke-width="1.3"></path></svg>
<div class="t" style="left: 508px; top: 391px; font-size: 12px; color: rgb(216, 216, 216); --w: 40; transform-origin: 0px 0px; transform: scaleX(0.909091);">色相(H):</div>
<div class="a" style="left:766px;top:386.5px;width:77px;height:24px;background:#5f5f5f;border:1px solid #6a6a6a;border-radius:2px"></div>
<div class="t" style="left:766px;width:72px;text-align:right;top:392.0px;font-size:12.5px;color:#e6e6e6;transform:scaleX(0.72);transform-origin:100% 0">164</div>
<svg class="a" style="left:854px;top:389.5px" width="12" height="18" fill="none" stroke="#bbb" stroke-width="1.3"><path d="M2 6l4-4 4 4M2 12l4 4 4-4"></path></svg>
<div class="a" style="left:514px;top:417px;width:353px;height:9px;background:#686868;border:1px solid #b4b4b4;border-radius:1.5px"></div>
<svg class="a" style="left:845.5px;top:426px" width="11" height="7" fill="none" stroke="#d8d8d8" stroke-width="1.3"><path d="M1 5.5l4.5-4.5 4.5 4.5"></path></svg>
<div class="t" style="left: 508px; top: 441.1px; font-size: 12px; color: rgb(216, 216, 216); --w: 40; transform-origin: 0px 0px; transform: scaleX(0.922855);">彩度(S):</div>
<div class="a" style="left:766px;top:436.5px;width:77px;height:24px;background:#5f5f5f;border:1px solid #6a6a6a;border-radius:2px"></div>
<div class="t" style="left:766px;width:72px;text-align:right;top:442.1px;font-size:12.5px;color:#e6e6e6;transform:scaleX(0.72);transform-origin:100% 0">0</div>
<svg class="a" style="left:854px;top:439.5px" width="12" height="18" fill="none" stroke="#bbb" stroke-width="1.3"><path d="M2 6l4-4 4 4M2 12l4 4 4-4"></path></svg>
<div class="a" style="left:514px;top:467px;width:353px;height:9px;background:#686868;border:1px solid #868686;border-radius:1.5px"></div>
<svg class="a" style="left:685.5px;top:476px" width="11" height="7" fill="none" stroke="#d8d8d8" stroke-width="1.3"><path d="M1 5.5l4.5-4.5 4.5 4.5"></path></svg>
<div class="t" style="left: 508px; top: 491.1px; font-size: 12px; color: rgb(216, 216, 216); --w: 40; transform-origin: 0px 0px; transform: scaleX(0.922855);">明度(V):</div>
<div class="a" style="left:766px;top:487px;width:77px;height:24px;background:#5f5f5f;border:1px solid #6a6a6a;border-radius:2px"></div>
<div class="t" style="left:766px;width:72px;text-align:right;top:492.1px;font-size:12.5px;color:#e6e6e6;transform:scaleX(0.72);transform-origin:100% 0">0</div>
<svg class="a" style="left:854px;top:490px" width="12" height="18" fill="none" stroke="#bbb" stroke-width="1.3"><path d="M2 6l4-4 4 4M2 12l4 4 4-4"></path></svg>
<div class="a" style="left:514px;top:518px;width:353px;height:9px;background:#686868;border:1px solid #868686;border-radius:1.5px"></div>
<svg class="a" style="left:685.5px;top:527px" width="11" height="7" fill="none" stroke="#d8d8d8" stroke-width="1.3"><path d="M1 5.5l4.5-4.5 4.5 4.5"></path></svg>
<div class="a" style="left:878px;top:386px;width:76px;height:18px;background:#6b7ba5;border:1px solid #7888b0;border-radius:2px"></div>
<div class="t" style="left:878px;width:76px;text-align:center;top:389px;font-size:12.5px;color:#dfe5f3;transform:scaleX(0.8)">OK</div>
<div class="a" style="left:878px;top:409px;width:76px;height:18px;background:#5c5c5c;border:1px solid #6c6c6c;border-radius:2px"></div>
<div class="t" style="left: 892px; top: 412px; font-size: 12px; color: rgb(222, 222, 222); --w: 48; transform-origin: 0px 0px; transform: scaleX(0.8);">キャンセル</div>
<div class="a" style="left:878px;top:432px;width:15px;height:16px;background:#5e5e5e;border:1px solid #6a6a6a;border-radius:2px"></div>
<svg class="a" style="left:879px;top:433px" width="14" height="14"><path d="M2.5 7.5l3 3.5 6-9" stroke="#f0f0f0" fill="none" stroke-width="2"></path></svg>
<div class="t" style="left: 897px; top: 434px; font-size: 12px; color: rgb(222, 222, 222); --w: 56; transform-origin: 0px 0px; transform: scaleX(0.736842);">プレビュー(P)</div>
<svg class="a" style="left:0;top:0" width="1024" height="942"><path d="M807 268 L839 268 Q842.5 268 842.5 271.5 L842.5 315 L855 315 Q860 315 857.5 319 L826 366 Q823 370 820 366 L788.5 319 Q786 315 791 315 L803.5 315 L803.5 271.5 Q803.5 268 807 268 Z" fill="#ea1c24"></path><rect x="500.9" y="375.1" width="370.1" height="62.8" fill="none" stroke="#ea1c24" stroke-width="8.6"></rect></svg>


</body></html>
